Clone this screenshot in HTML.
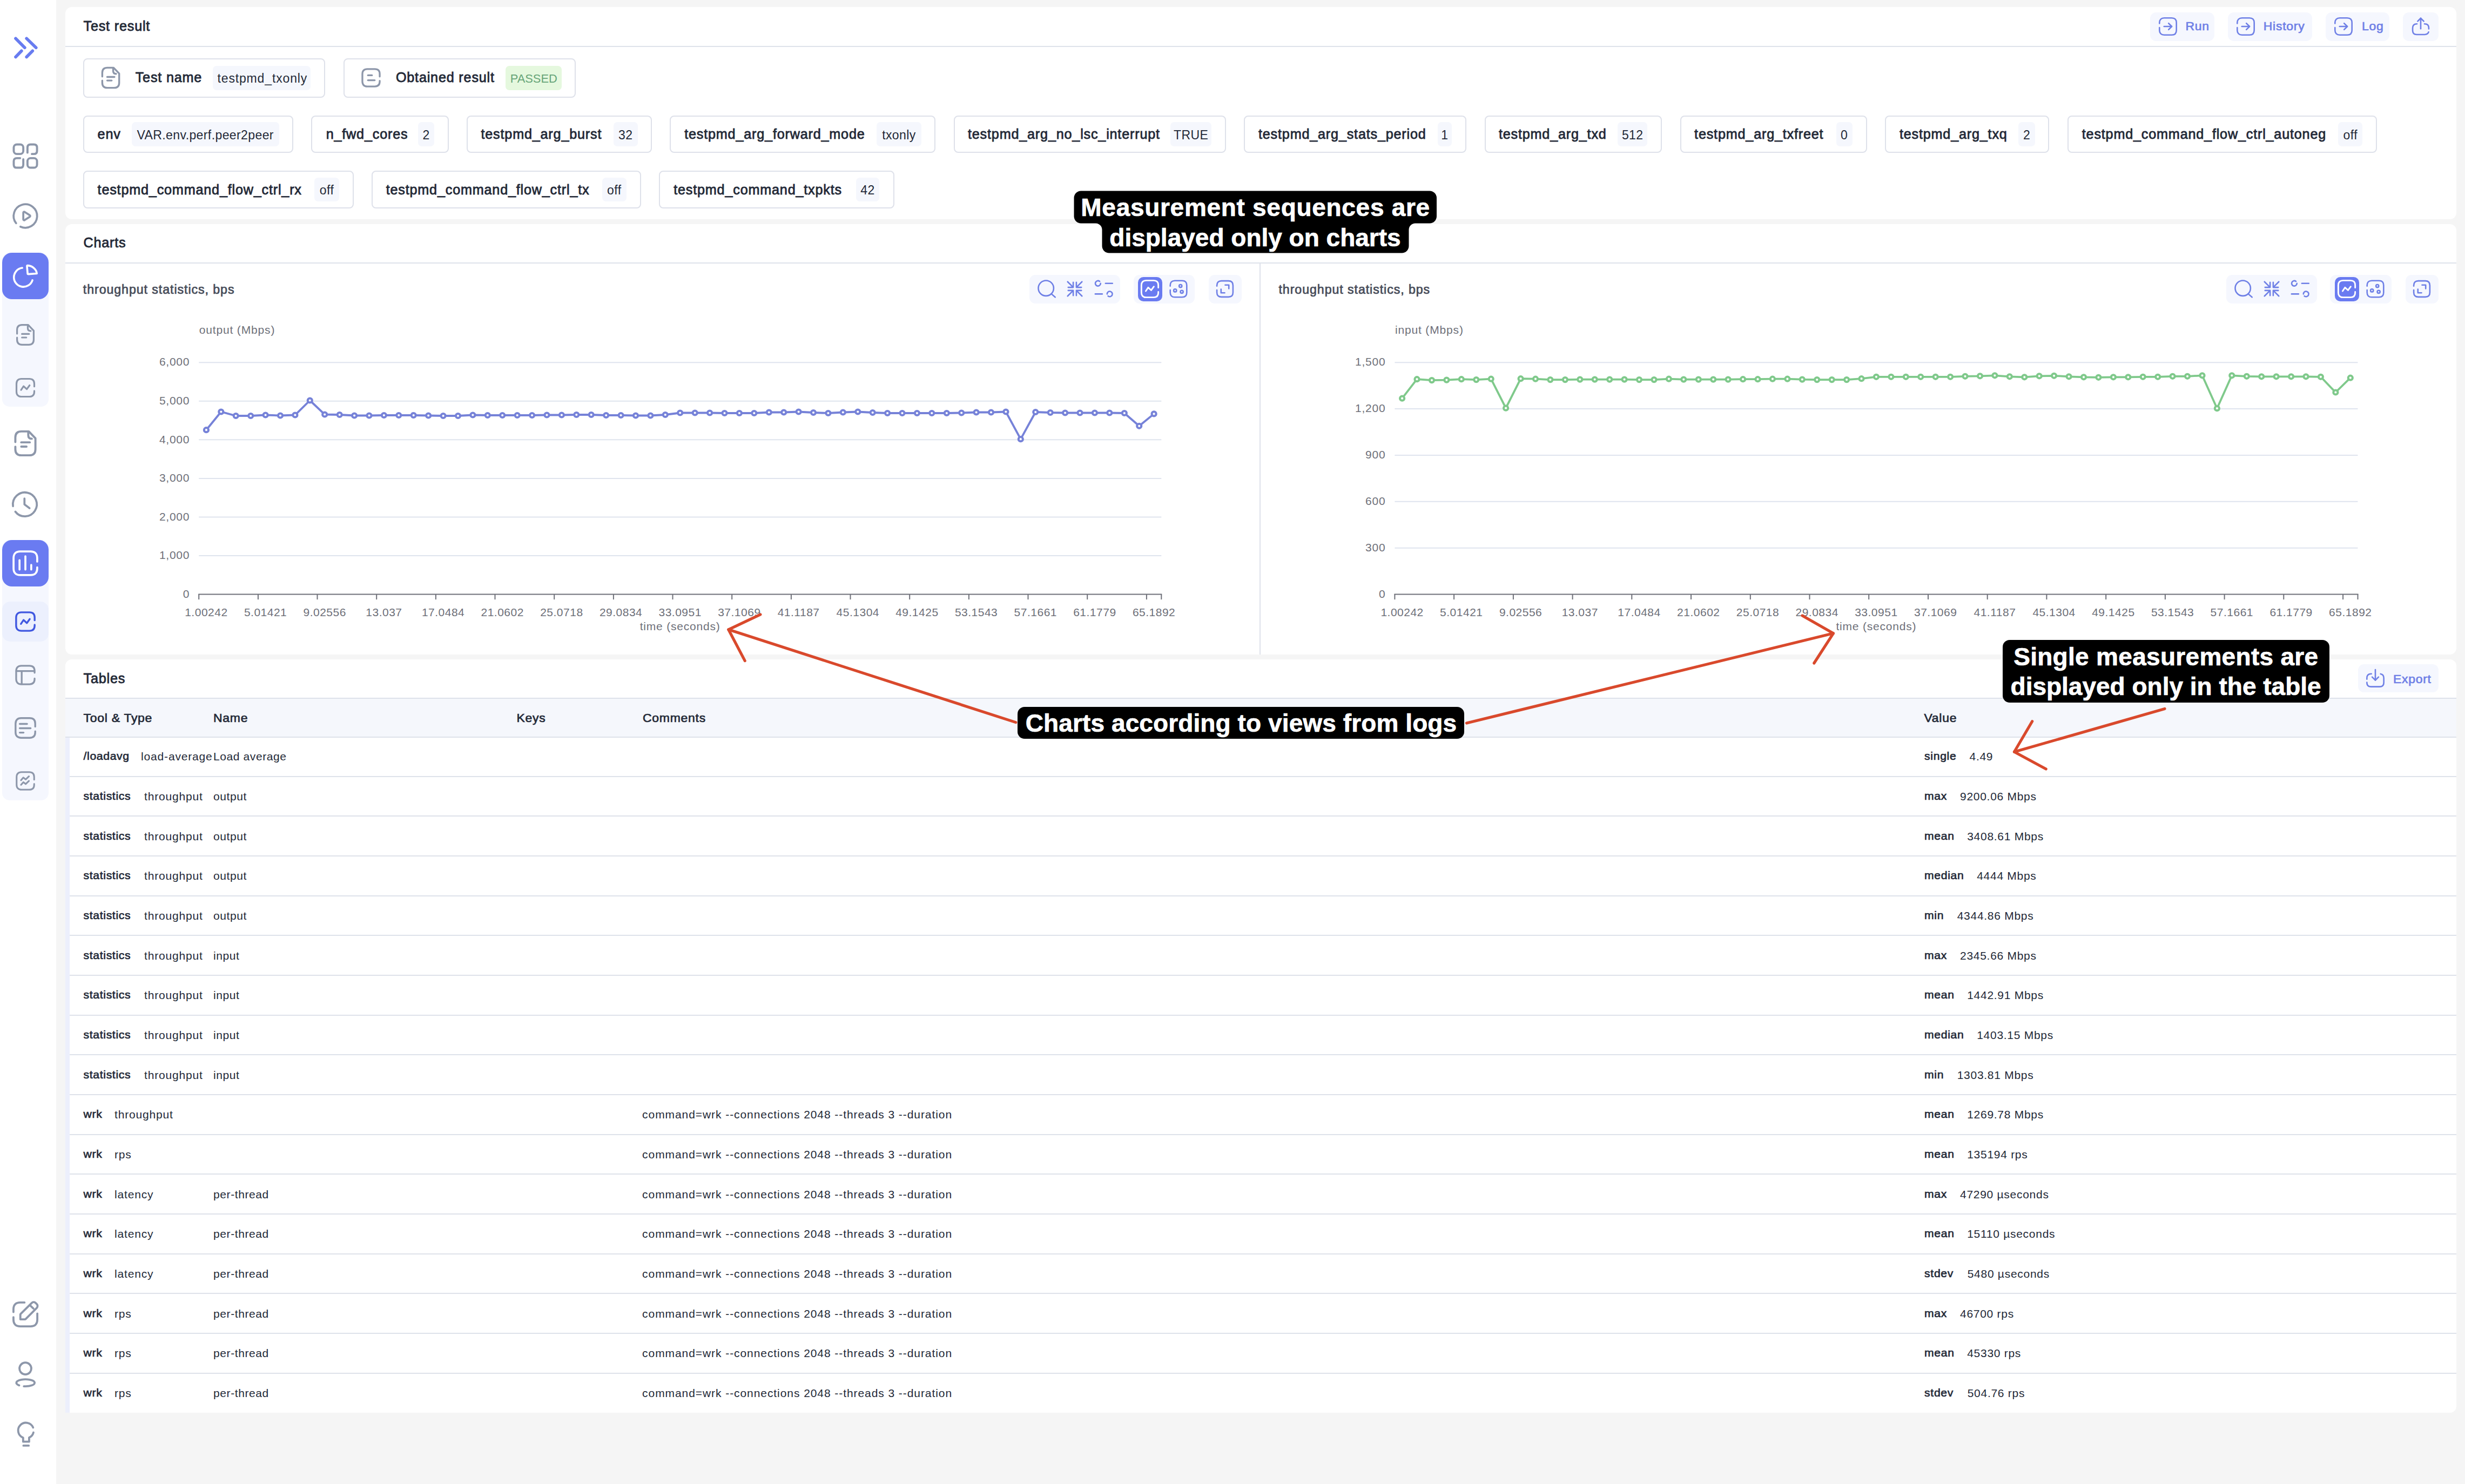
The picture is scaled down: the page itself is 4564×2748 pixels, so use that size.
<!DOCTYPE html>
<html><head><meta charset="utf-8"><title>Test result</title>
<style>
html,body{margin:0;padding:0}
body{width:4564px;height:2748px;background:#f5f5f5;position:relative;overflow:hidden;font-family:"Liberation Sans", sans-serif;}
.a{position:absolute;display:block}
.t{position:absolute;line-height:1;white-space:pre;font-family:"Liberation Sans", sans-serif;}
</style></head><body>
<div class="a" style="left:0.0px;top:0.0px;width:104.0px;height:2748.0px;background:#fff;"></div>
<svg class="a" style="left:0;top:40px" width="104" height="100" viewBox="0 40 104 100" fill="none" stroke="#687cf0" stroke-width="5.7" stroke-linecap="round"><path d="M29 71.3L45.8 88.2M29 105.4L39.8 94.3M49.2 71.3L66.7 88.2M49.2 105.4L60.3 94.3"/></svg>
<svg class="a" style="left:7.2px;top:249.4px" width="80" height="80" viewBox="-40 -40 80 80" fill="none" stroke="#8d97aa" stroke-width="1.719" stroke-linecap="round" stroke-linejoin="round"><g transform="scale(2.2684) translate(-12 -12)"><rect x="2.500" y="2.500" width="7.800" height="7.800" rx="2.500"/><path d="M13.700 9.200V5c0-1.700.8-2.500 2.500-2.500h2.800c1.700 0 2.500.8 2.500 2.500v2.800c0 1.700-.8 2.500-2.500 2.500h-1.700"/><path d="M7.700 13.700H5c-1.700 0-2.500.8-2.500 2.500V19c0 1.700.8 2.500 2.500 2.500h2.800c1.700 0 2.500-.8 2.500-2.500v-4.400"/><rect x="13.700" y="13.700" width="7.800" height="7.800" rx="2.500"/></g></svg>
<svg class="a" style="left:7.2px;top:360.3px" width="80" height="80" viewBox="-40 -40 80 80" fill="none" stroke="#8d97aa" stroke-width="1.616" stroke-linecap="round" stroke-linejoin="round"><g transform="scale(2.2895) translate(-12 -12)"><path d="M4.510 17.850A9.500 9.500 0 1 1 7.990 20.610"/><path d="M10.300 9.300v5.400c0 .6.600.900 1.100.6l4.200-2.700c.4-.3.400-.9 0-1.200l-4.200-2.700c-.5-.3-1.100 0-1.100.6z"/></g></svg>
<div class="a" style="left:4.0px;top:468.0px;width:86.0px;height:285.0px;background:#f5f7fe;border-radius:14px;"></div>
<div class="a" style="left:4.0px;top:468.0px;width:86.0px;height:85.5px;background:#6a7bf1;border-radius:18px;"></div>
<svg class="a" style="left:7.2px;top:470.5px" width="80" height="80" viewBox="-40 -40 80 80" fill="none" stroke="#fff" stroke-width="1.580" stroke-linecap="round" stroke-linejoin="round"><g transform="scale(2.2789) translate(-12 -12)"><path d="M9.440 5.440A7.720 7.720 0 1 0 17.720 15.490"/><path d="M13.300 4.100l.5 5.800c0 .4.200.6.600.6l6.900-.5C21 6.500 17.600 3.800 13.900 3.500c-.4 0-.6.200-.6.600z"/></g></svg>
<svg class="a" style="left:7.3px;top:579.5px" width="80" height="80" viewBox="-40 -40 80 80" fill="none" stroke="#8d97aa" stroke-width="1.662" stroke-linecap="round" stroke-linejoin="round"><g transform="scale(1.9250) translate(-12 -12)"><path d="M4 10.900V7.300C4 4.200 5.700 2.500 8.800 2.500h5.900L20 8v8.700c0 3.100-1.700 4.800-4.800 4.800H8.800C5.700 21.500 4 19.800 4 16.700v-2.000"/><path d="M14.300 2.800v2.700c0 1.800 1 2.800 2.800 2.800"/><path d="M8.700 11.200h6.800"/><path d="M8.700 14.600h4.200"/></g></svg>
<svg class="a" style="left:7.0px;top:677.8px" width="80" height="80" viewBox="-40 -40 80 80" fill="none" stroke="#8d97aa" stroke-width="1.842" stroke-linecap="round" stroke-linejoin="round"><g transform="scale(1.7368) translate(-12 -12)"><path d="M21.5 15.3v.9c0 3.4-1.900 5.300-5.300 5.300H7.800c-3.400 0-5.300-1.900-5.300-5.300V7.800c0-3.400 1.900-5.300 5.300-5.300h8.400c3.400 0 5.300 1.900 5.300 5.300v2.900"/><path d="M7.400 14.400l2.700-4.000 3.400 3.100 3.000-4.100"/></g></svg>
<svg class="a" style="left:6.9px;top:781.3px" width="80" height="80" viewBox="-40 -40 80 80" fill="none" stroke="#8d97aa" stroke-width="1.677" stroke-linecap="round" stroke-linejoin="round"><g transform="scale(2.3250) translate(-12 -12)"><path d="M4 10.900V7.300C4 4.200 5.700 2.500 8.800 2.500h5.900L20 8v8.700c0 3.100-1.700 4.800-4.800 4.800H8.800C5.700 21.500 4 19.800 4 16.700v-2.000"/><path d="M14.300 2.800v2.700c0 1.800 1 2.800 2.800 2.800"/><path d="M8.700 11.200h6.800"/><path d="M8.700 14.600h4.200"/></g></svg>
<svg class="a" style="left:6.3px;top:893.9px" width="80" height="80" viewBox="-40 -40 80 80" fill="none" stroke="#8d97aa" stroke-width="1.630" stroke-linecap="round" stroke-linejoin="round"><g transform="scale(2.3316) translate(-12 -12)"><path d="M2.600 13.400A9.500 9.500 0 1 1 4.460 17.780"/><path d="M11.700 7.400v4.600l4 3"/></g></svg>
<div class="a" style="left:4.0px;top:1000.0px;width:86.0px;height:482.0px;background:#f5f7fe;border-radius:14px;"></div>
<div class="a" style="left:4.0px;top:1000.0px;width:86.0px;height:85.5px;background:#6a7bf1;border-radius:18px;"></div>
<svg class="a" style="left:7.3px;top:1002.7px" width="80" height="80" viewBox="-40 -40 80 80" fill="none" stroke="#fff" stroke-width="1.605" stroke-linecap="round" stroke-linejoin="round"><g transform="scale(2.3053) translate(-12 -12)"><path d="M21.5 15.3v.9c0 3.4-1.900 5.300-5.300 5.300H7.800c-3.400 0-5.300-1.900-5.300-5.300V7.800c0-3.400 1.900-5.300 5.300-5.300h8.400c3.400 0 5.300 1.900 5.300 5.300v2.900"/><path d="M7.300 9.600v7.400"/><path d="M12 6.400v10.600"/><path d="M16.700 13.300v3.700"/></g></svg>
<div class="a" style="left:4.0px;top:1113.5px;width:86.0px;height:74.8px;background:#ecf0fd;border-radius:15px;"></div>
<svg class="a" style="left:7.2px;top:1111.2px" width="80" height="80" viewBox="-40 -40 80 80" fill="none" stroke="#4058e0" stroke-width="1.883" stroke-linecap="round" stroke-linejoin="round"><g transform="scale(1.8053) translate(-12 -12)"><path d="M21.5 15.3v.9c0 3.4-1.900 5.300-5.300 5.300H7.800c-3.400 0-5.300-1.900-5.300-5.300V7.800c0-3.400 1.900-5.300 5.300-5.300h8.400c3.400 0 5.300 1.900 5.300 5.300v2.900"/><path d="M7.400 14.400l2.700-4.000 3.400 3.100 3.000-4.100"/></g></svg>
<svg class="a" style="left:7.3px;top:1209.5px" width="80" height="80" viewBox="-40 -40 80 80" fill="none" stroke="#8d97aa" stroke-width="1.839" stroke-linecap="round" stroke-linejoin="round"><g transform="scale(1.7947) translate(-12 -12)"><path d="M21.5 15.6v.6c0 3.400-1.900 5.300-5.300 5.300H7.800c-3.400 0-5.300-1.900-5.300-5.300V7.800c0-3.400 1.900-5.300 5.300-5.300h8.400c3.400 0 5.300 1.900 5.300 5.300v1.900"/><path d="M2.700 7.900h18.600"/><path d="M8.200 8.100v13.200"/></g></svg>
<svg class="a" style="left:7.0px;top:1307.5px" width="80" height="80" viewBox="-40 -40 80 80" fill="none" stroke="#8d97aa" stroke-width="1.775" stroke-linecap="round" stroke-linejoin="round"><g transform="scale(1.9158) translate(-12 -12)"><path d="M21.5 15.3v.9c0 3.4-1.900 5.300-5.300 5.300H7.800c-3.400 0-5.300-1.900-5.300-5.300V7.800c0-3.400 1.900-5.300 5.300-5.300h8.400c3.400 0 5.300 1.900 5.300 5.300v2.900"/><path d="M6.600 8.100h7"/><path d="M6.600 12.300h10.400"/><path d="M6.600 16.500h3.600"/></g></svg>
<svg class="a" style="left:7.1px;top:1406.3px" width="80" height="80" viewBox="-40 -40 80 80" fill="none" stroke="#8d97aa" stroke-width="1.812" stroke-linecap="round" stroke-linejoin="round"><g transform="scale(1.7105) translate(-12 -12)"><path d="M21.5 15.3v.9c0 3.4-1.900 5.300-5.300 5.300H7.800c-3.400 0-5.300-1.900-5.300-5.300V7.800c0-3.400 1.900-5.300 5.300-5.300h8.400c3.400 0 5.300 1.900 5.300 5.300v2.900"/><path d="M7.300 11.300l2.500-2.900 2.500 2 3.500-3.300"/><path d="M7.300 16.300l2.500-2.900 2.500 2 3.500-3.300"/></g></svg>
<svg class="a" style="left:7.2px;top:2394.2px" width="80" height="80" viewBox="-40 -40 80 80" fill="none" stroke="#8d97aa" stroke-width="1.633" stroke-linecap="round" stroke-linejoin="round"><g transform="scale(2.3263) translate(-12 -12)"><path d="M11.300 2.500H7.800c-3.400 0-5.300 1.900-5.300 5.300v2.300"/><path d="M2.500 14.200v2c0 3.400 1.900 5.300 5.300 5.300h8.400c3.400 0 5.300-1.900 5.300-5.300v-4.900"/><path d="M8 15.900v-3.700c0-.3.100-.5.300-.7l8.700-8.600c.9-.9 2.300-.9 3.200 0l.8.800c.9.900.9 2.300 0 3.200l-8.700 8.700c-.2.200-.4.300-.7.300H8z"/><path d="M15.700 4.700l2.700 2.600"/></g></svg>
<svg class="a" style="left:7.0px;top:2505.5px" width="80" height="80" viewBox="-40 -40 80 80" fill="none" stroke="#8d97aa" stroke-width="1.633" stroke-linecap="round" stroke-linejoin="round"><g transform="scale(2.3263) translate(-12 -12)"><circle cx="12" cy="6.9" r="4.7"/><path d="M10.8 21.06A7.3 2.8 0 1 0 7.06 20.33"/></g></svg>
<svg class="a" style="left:8.0px;top:2614.0px" width="80" height="80" viewBox="-40 -40 80 80" fill="none" stroke="#8d97aa" stroke-width="1.796" stroke-linecap="round" stroke-linejoin="round"><g transform="scale(2.1158) translate(-12 -12)"><path d="M18.57 11.36A6.8 6.8 0 0 1 14.8 15.8V19.4H9.55V15.94A6.8 6.8 0 1 1 18.3 7.05"/><path d="M9.8 22.85h4.65"/></g></svg>
<div class="a" style="left:121.0px;top:13.0px;width:4427.0px;height:392.5px;background:#fff;border-radius:12px;"></div>
<div class="t" style="left:154.5px;top:36.0px;font-size:25.2px;font-weight:400;color:#232937;letter-spacing:0.8064px;-webkit-text-stroke:0.81px #232937;">Test result</div>
<div class="a" style="left:121.0px;top:85.2px;width:4427.0px;height:2.0px;background:#dee2ea;"></div>
<div class="a" style="left:3981.4px;top:22.7px;width:118.3px;height:53.0px;background:#f5f7fe;border-radius:11px;"></div>
<svg class="a" style="left:3973.5px;top:9.2px" width="80" height="80" viewBox="-40 -40 80 80" fill="none" stroke="#6f80e6" stroke-width="1.573" stroke-linecap="round" stroke-linejoin="round"><g transform="scale(1.6526) translate(-12 -12)"><path d="M2.500 8.700V7.800c0-3.400 1.900-5.300 5.300-5.300h8.400c3.400 0 5.300 1.900 5.300 5.300v8.400c0 3.400-1.900 5.300-5.300 5.300H7.800c-3.400 0-5.300-1.900-5.300-5.300v-2.900"/><path d="M7.600 12h8.600"/><path d="M12.700 8.400l3.600 3.600-3.600 3.600"/></g></svg>
<div class="t" style="left:4046.4px;top:37.4px;font-size:22.96px;font-weight:400;color:#6f80e6;letter-spacing:0.73472px;-webkit-text-stroke:0.73px #6f80e6;">Run</div>
<div class="a" style="left:4125.0px;top:22.7px;width:156.3px;height:53.0px;background:#f5f7fe;border-radius:11px;"></div>
<svg class="a" style="left:4117.5px;top:9.2px" width="80" height="80" viewBox="-40 -40 80 80" fill="none" stroke="#6f80e6" stroke-width="1.573" stroke-linecap="round" stroke-linejoin="round"><g transform="scale(1.6526) translate(-12 -12)"><path d="M2.500 8.700V7.800c0-3.400 1.900-5.300 5.300-5.300h8.400c3.400 0 5.300 1.900 5.300 5.300v8.400c0 3.400-1.900 5.300-5.300 5.300H7.800c-3.400 0-5.300-1.900-5.300-5.300v-2.900"/><path d="M7.600 12h8.600"/><path d="M12.700 8.400l3.600 3.600-3.600 3.600"/></g></svg>
<div class="t" style="left:4190.8px;top:37.4px;font-size:22.96px;font-weight:400;color:#6f80e6;letter-spacing:0.73472px;-webkit-text-stroke:0.73px #6f80e6;">History</div>
<div class="a" style="left:4305.7px;top:22.7px;width:118.8px;height:53.0px;background:#f5f7fe;border-radius:11px;"></div>
<svg class="a" style="left:4298.5px;top:9.2px" width="80" height="80" viewBox="-40 -40 80 80" fill="none" stroke="#6f80e6" stroke-width="1.573" stroke-linecap="round" stroke-linejoin="round"><g transform="scale(1.6526) translate(-12 -12)"><path d="M2.500 8.700V7.800c0-3.400 1.900-5.300 5.300-5.300h8.400c3.400 0 5.300 1.900 5.300 5.300v8.400c0 3.400-1.900 5.300-5.300 5.300H7.800c-3.400 0-5.300-1.900-5.300-5.300v-2.900"/><path d="M7.600 12h8.600"/><path d="M12.700 8.400l3.600 3.600-3.600 3.600"/></g></svg>
<div class="t" style="left:4373.0px;top:37.4px;font-size:22.96px;font-weight:400;color:#6f80e6;letter-spacing:0.73472px;-webkit-text-stroke:0.73px #6f80e6;">Log</div>
<div class="a" style="left:4449.3px;top:22.7px;width:65.7px;height:53.0px;background:#f5f7fe;border-radius:11px;"></div>
<svg class="a" style="left:4442.0px;top:9.2px" width="80" height="80" viewBox="-40 -40 80 80" fill="none" stroke="#6f80e6" stroke-width="1.652" stroke-linecap="round" stroke-linejoin="round"><g transform="scale(1.5737) translate(-12 -12)"><path d="M12 2.300v12.400"/><path d="M8.400 5.900L12 2.300l3.600 3.600"/><path d="M7.600 9H7.300C4.200 9 2.500 10.700 2.500 13.800v2.900c0 3.100 1.700 4.800 4.800 4.800h9.400c2.400 0 4-1 4.600-3"/><path d="M16.400 9h.3c3.100 0 4.800 1.700 4.800 4.800v1.100"/></g></svg>
<div class="a" style="left:153.8px;top:107.8px;width:448.4px;height:72.8px;background:#fff;border-radius:8px;border:2px solid #dee1ea;box-sizing:border-box;"></div>
<svg class="a" style="left:164.5px;top:104.2px" width="80" height="80" viewBox="-40 -40 80 80" fill="none" stroke="#8d97aa" stroke-width="1.738" stroke-linecap="round" stroke-linejoin="round"><g transform="scale(1.9563) translate(-12 -12)"><path d="M4 10.900V7.300C4 4.200 5.700 2.500 8.800 2.500h5.900L20 8v8.700c0 3.100-1.700 4.800-4.800 4.800H8.800C5.700 21.500 4 19.800 4 16.700v-2.000"/><path d="M14.300 2.800v2.700c0 1.800 1 2.800 2.800 2.800"/><path d="M8.700 11.200h6.800"/><path d="M8.700 14.600h4.200"/></g></svg>
<div class="t" style="left:250.7px;top:131.0px;font-size:25.2px;font-weight:400;color:#232937;letter-spacing:0.8064px;-webkit-text-stroke:0.81px #232937;">Test name</div>
<div class="a" style="left:394.4px;top:122.2px;width:181.1px;height:44.4px;background:#f5f7fd;border-radius:7px;"></div>
<div class="t" style="left:402.5px;top:133.7px;font-size:23px;font-weight:400;color:#232937;letter-spacing:0.85px;">testpmd_txonly</div>
<div class="a" style="left:635.9px;top:107.8px;width:430.1px;height:72.8px;background:#fff;border-radius:8px;border:2px solid #dee1ea;box-sizing:border-box;"></div>
<svg class="a" style="left:646.6px;top:104.3px" width="80" height="80" viewBox="-40 -40 80 80" fill="none" stroke="#8d97aa" stroke-width="1.953" stroke-linecap="round" stroke-linejoin="round"><g transform="scale(1.6895) translate(-12 -12)"><path d="M21.5 15.3v.9c0 3.4-1.900 5.300-5.300 5.300H7.800c-3.400 0-5.300-1.900-5.300-5.300V7.800c0-3.400 1.900-5.300 5.300-5.300h8.400c3.400 0 5.300 1.900 5.300 5.300v2.900"/><path d="M8.600 9.300h4.400"/><path d="M8.600 14.700h7.400"/></g></svg>
<div class="t" style="left:732.9px;top:131.0px;font-size:25.2px;font-weight:400;color:#232937;letter-spacing:0.8064px;-webkit-text-stroke:0.81px #232937;">Obtained result</div>
<div class="a" style="left:935.9px;top:122.2px;width:104.0px;height:44.4px;background:#e5f8de;border-radius:7px;"></div>
<div class="t" style="left:944.7px;top:134.7px;font-size:21.9px;font-weight:400;color:#67a578;">PASSED</div>
<div class="a" style="left:153.8px;top:213.9px;width:389.4px;height:69.6px;background:#fff;border-radius:8px;border:2px solid #dee1ea;box-sizing:border-box;"></div>
<div class="t" style="left:180.6px;top:236.2px;font-size:25.2px;font-weight:400;color:#232937;letter-spacing:0.8064px;-webkit-text-stroke:0.81px #232937;">env</div>
<div class="a" style="left:243.9px;top:226.3px;width:272.7px;height:44.6px;background:#f5f7fd;border-radius:7px;"></div>
<div class="t" style="left:-619.8px;width:2000px;text-align:center;top:238.9px;font-size:23px;font-weight:400;color:#232937;letter-spacing:0.4px;">VAR.env.perf.peer2peer</div>
<div class="a" style="left:576.4px;top:213.9px;width:254.4px;height:69.6px;background:#fff;border-radius:8px;border:2px solid #dee1ea;box-sizing:border-box;"></div>
<div class="t" style="left:603.7px;top:236.2px;font-size:25.2px;font-weight:400;color:#232937;letter-spacing:0.8064px;-webkit-text-stroke:0.81px #232937;">n_fwd_cores</div>
<div class="a" style="left:774.0px;top:226.3px;width:30.3px;height:44.6px;background:#f5f7fd;border-radius:7px;"></div>
<div class="t" style="left:-210.9px;width:2000px;text-align:center;top:238.9px;font-size:23px;font-weight:400;color:#232937;letter-spacing:0.4px;">2</div>
<div class="a" style="left:864.2px;top:213.9px;width:342.4px;height:69.6px;background:#fff;border-radius:8px;border:2px solid #dee1ea;box-sizing:border-box;"></div>
<div class="t" style="left:890.5px;top:236.2px;font-size:25.2px;font-weight:400;color:#232937;letter-spacing:0.8064px;-webkit-text-stroke:0.81px #232937;">testpmd_arg_burst</div>
<div class="a" style="left:1135.8px;top:226.3px;width:44.8px;height:44.6px;background:#f5f7fd;border-radius:7px;"></div>
<div class="t" style="left:158.2px;width:2000px;text-align:center;top:238.9px;font-size:23px;font-weight:400;color:#232937;letter-spacing:0.4px;">32</div>
<div class="a" style="left:1240.4px;top:213.9px;width:492.0px;height:69.6px;background:#fff;border-radius:8px;border:2px solid #dee1ea;box-sizing:border-box;"></div>
<div class="t" style="left:1267.2px;top:236.2px;font-size:25.2px;font-weight:400;color:#232937;letter-spacing:0.8064px;-webkit-text-stroke:0.81px #232937;">testpmd_arg_forward_mode</div>
<div class="a" style="left:1623.0px;top:226.3px;width:82.8px;height:44.6px;background:#f5f7fd;border-radius:7px;"></div>
<div class="t" style="left:664.4px;width:2000px;text-align:center;top:238.9px;font-size:23px;font-weight:400;color:#232937;letter-spacing:0.4px;">txonly</div>
<div class="a" style="left:1765.7px;top:213.9px;width:504.2px;height:69.6px;background:#fff;border-radius:8px;border:2px solid #dee1ea;box-sizing:border-box;"></div>
<div class="t" style="left:1792.0px;top:236.2px;font-size:25.2px;font-weight:400;color:#232937;letter-spacing:0.8064px;-webkit-text-stroke:0.81px #232937;">testpmd_arg_no_lsc_interrupt</div>
<div class="a" style="left:2167.4px;top:226.3px;width:75.4px;height:44.6px;background:#f5f7fd;border-radius:7px;"></div>
<div class="t" style="left:1205.1px;width:2000px;text-align:center;top:238.9px;font-size:23px;font-weight:400;color:#232937;letter-spacing:0.4px;">TRUE</div>
<div class="a" style="left:2303.2px;top:213.9px;width:411.6px;height:69.6px;background:#fff;border-radius:8px;border:2px solid #dee1ea;box-sizing:border-box;"></div>
<div class="t" style="left:2330.0px;top:236.2px;font-size:25.2px;font-weight:400;color:#232937;letter-spacing:0.8064px;-webkit-text-stroke:0.81px #232937;">testpmd_arg_stats_period</div>
<div class="a" style="left:2661.9px;top:226.3px;width:25.8px;height:44.6px;background:#f5f7fd;border-radius:7px;"></div>
<div class="t" style="left:1674.8px;width:2000px;text-align:center;top:238.9px;font-size:23px;font-weight:400;color:#232937;letter-spacing:0.4px;">1</div>
<div class="a" style="left:2748.6px;top:213.9px;width:328.4px;height:69.6px;background:#fff;border-radius:8px;border:2px solid #dee1ea;box-sizing:border-box;"></div>
<div class="t" style="left:2774.9px;top:236.2px;font-size:25.2px;font-weight:400;color:#232937;letter-spacing:0.8064px;-webkit-text-stroke:0.81px #232937;">testpmd_arg_txd</div>
<div class="a" style="left:2994.9px;top:226.3px;width:55.5px;height:44.6px;background:#f5f7fd;border-radius:7px;"></div>
<div class="t" style="left:2022.7px;width:2000px;text-align:center;top:238.9px;font-size:23px;font-weight:400;color:#232937;letter-spacing:0.4px;">512</div>
<div class="a" style="left:3110.8px;top:213.9px;width:346.0px;height:69.6px;background:#fff;border-radius:8px;border:2px solid #dee1ea;box-sizing:border-box;"></div>
<div class="t" style="left:3137.1px;top:236.2px;font-size:25.2px;font-weight:400;color:#232937;letter-spacing:0.8064px;-webkit-text-stroke:0.81px #232937;">testpmd_arg_txfreet</div>
<div class="a" style="left:3399.5px;top:226.3px;width:30.2px;height:44.6px;background:#f5f7fd;border-radius:7px;"></div>
<div class="t" style="left:2414.6px;width:2000px;text-align:center;top:238.9px;font-size:23px;font-weight:400;color:#232937;letter-spacing:0.4px;">0</div>
<div class="a" style="left:3490.1px;top:213.9px;width:304.1px;height:69.6px;background:#fff;border-radius:8px;border:2px solid #dee1ea;box-sizing:border-box;"></div>
<div class="t" style="left:3516.9px;top:236.2px;font-size:25.2px;font-weight:400;color:#232937;letter-spacing:0.8064px;-webkit-text-stroke:0.81px #232937;">testpmd_arg_txq</div>
<div class="a" style="left:3737.4px;top:226.3px;width:30.2px;height:44.6px;background:#f5f7fd;border-radius:7px;"></div>
<div class="t" style="left:2752.5px;width:2000px;text-align:center;top:238.9px;font-size:23px;font-weight:400;color:#232937;letter-spacing:0.4px;">2</div>
<div class="a" style="left:3827.5px;top:213.9px;width:573.8px;height:69.6px;background:#fff;border-radius:8px;border:2px solid #dee1ea;box-sizing:border-box;"></div>
<div class="t" style="left:3854.8px;top:236.2px;font-size:25.2px;font-weight:400;color:#232937;letter-spacing:0.8064px;-webkit-text-stroke:0.81px #232937;">testpmd_command_flow_ctrl_autoneg</div>
<div class="a" style="left:4329.4px;top:226.3px;width:44.8px;height:44.6px;background:#f5f7fd;border-radius:7px;"></div>
<div class="t" style="left:3351.8px;width:2000px;text-align:center;top:238.9px;font-size:23px;font-weight:400;color:#232937;letter-spacing:0.4px;">off</div>
<div class="a" style="left:153.8px;top:316.3px;width:501.3px;height:69.6px;background:#fff;border-radius:8px;border:2px solid #dee1ea;box-sizing:border-box;"></div>
<div class="t" style="left:180.6px;top:338.6px;font-size:25.2px;font-weight:400;color:#232937;letter-spacing:0.8064px;-webkit-text-stroke:0.81px #232937;">testpmd_command_flow_ctrl_rx</div>
<div class="a" style="left:582.3px;top:328.7px;width:45.3px;height:44.6px;background:#f5f7fd;border-radius:7px;"></div>
<div class="t" style="left:-395.0px;width:2000px;text-align:center;top:341.3px;font-size:23px;font-weight:400;color:#232937;letter-spacing:0.4px;">off</div>
<div class="a" style="left:688.4px;top:316.3px;width:498.9px;height:69.6px;background:#fff;border-radius:8px;border:2px solid #dee1ea;box-sizing:border-box;"></div>
<div class="t" style="left:714.7px;top:338.6px;font-size:25.2px;font-weight:400;color:#232937;letter-spacing:0.8064px;-webkit-text-stroke:0.81px #232937;">testpmd_command_flow_ctrl_tx</div>
<div class="a" style="left:1114.9px;top:328.7px;width:44.8px;height:44.6px;background:#f5f7fd;border-radius:7px;"></div>
<div class="t" style="left:137.3px;width:2000px;text-align:center;top:341.3px;font-size:23px;font-weight:400;color:#232937;letter-spacing:0.4px;">off</div>
<div class="a" style="left:1220.4px;top:316.3px;width:435.6px;height:69.6px;background:#fff;border-radius:8px;border:2px solid #dee1ea;box-sizing:border-box;"></div>
<div class="t" style="left:1247.2px;top:338.6px;font-size:25.2px;font-weight:400;color:#232937;letter-spacing:0.8064px;-webkit-text-stroke:0.81px #232937;">testpmd_command_txpkts</div>
<div class="a" style="left:1584.6px;top:328.7px;width:43.8px;height:44.6px;background:#f5f7fd;border-radius:7px;"></div>
<div class="t" style="left:606.5px;width:2000px;text-align:center;top:341.3px;font-size:23px;font-weight:400;color:#232937;letter-spacing:0.4px;">42</div>
<div class="a" style="left:121.0px;top:414.8px;width:4427.0px;height:797.6px;background:#fff;border-radius:12px;"></div>
<div class="t" style="left:154.5px;top:437.2px;font-size:25.2px;font-weight:400;color:#232937;letter-spacing:0.8064px;-webkit-text-stroke:0.81px #232937;">Charts</div>
<div class="a" style="left:121.0px;top:486.0px;width:4427.0px;height:2.0px;background:#dee2ea;"></div>
<div class="a" style="left:2332.0px;top:488.0px;width:2.0px;height:724.4px;background:#dee2ea;"></div>
<div class="a" style="left:1906.4px;top:508.8px;width:167.6px;height:52.8px;background:#f5f7fe;border-radius:11px;"></div>
<svg class="a" style="left:1897.8px;top:495.1px" width="80" height="80" viewBox="-40 -40 80 80" fill="none" stroke="#6f80e6" stroke-width="1.594" stroke-linecap="round" stroke-linejoin="round"><g transform="scale(1.6316) translate(-12 -12)"><circle cx="11.200" cy="11.200" r="8.700"/><path d="M17.600 17.900l4 3.500"/></g></svg>
<svg class="a" style="left:1950.4px;top:495.1px" width="80" height="80" viewBox="-40 -40 80 80" fill="none" stroke="#6f80e6" stroke-width="1.703" stroke-linecap="round" stroke-linejoin="round"><g transform="scale(1.5263) translate(-12 -12)"><path d="M3.300 3.300l6.500 6.500"/><path d="M4 10.100h6.100V4"/><path d="M20.700 3.300l-6.500 6.500"/><path d="M20 10.100h-6.100V4"/><path d="M3.300 20.700l6.500-6.500"/><path d="M4 13.900h6.100V20"/><path d="M20.700 20.700l-6.500-6.500"/><path d="M20 13.900h-6.100V20"/></g></svg>
<svg class="a" style="left:2003.6px;top:495.1px" width="80" height="80" viewBox="-40 -40 80 80" fill="none" stroke="#6f80e6" stroke-width="1.549" stroke-linecap="round" stroke-linejoin="round"><g transform="scale(1.6789) translate(-12 -12)"><path d="M7.26 3.68A2.900 2.900 0 1 0 8.300 5.900"/><path d="M13.700 5.900h7.700"/><path d="M16.540 19.820A2.900 2.900 0 1 0 15.500 17.600"/><path d="M10.100 17.600H2.400"/></g></svg>
<div class="a" style="left:2098.7px;top:508.8px;width:113.7px;height:52.8px;background:#f5f7fe;border-radius:11px;"></div>
<div class="a" style="left:2106.9px;top:512.8px;width:45.0px;height:45.0px;background:#6a7bf1;border-radius:10px;"></div>
<svg class="a" style="left:2089.4px;top:495.3px" width="80" height="80" viewBox="-40 -40 80 80" fill="none" stroke="#fff" stroke-width="1.760" stroke-linecap="round" stroke-linejoin="round"><g transform="scale(1.6474) translate(-12 -12)"><path d="M21.5 15.3v.9c0 3.4-1.900 5.300-5.300 5.300H7.800c-3.400 0-5.300-1.900-5.300-5.300V7.800c0-3.400 1.900-5.300 5.300-5.300h8.400c3.400 0 5.300 1.900 5.300 5.300v2.900"/><path d="M7.400 14.400l2.700-4.000 3.400 3.100 3.000-4.100"/></g></svg>
<svg class="a" style="left:2142.2px;top:495.1px" width="80" height="80" viewBox="-40 -40 80 80" fill="none" stroke="#6f80e6" stroke-width="1.614" stroke-linecap="round" stroke-linejoin="round"><g transform="scale(1.6105) translate(-12 -12)"><path d="M2.500 8.700V7.800c0-3.400 1.900-5.300 5.300-5.300h8.400c3.400 0 5.300 1.900 5.300 5.300v8.400c0 3.400-1.900 5.300-5.300 5.300H7.800c-3.400 0-5.300-1.900-5.300-5.300v-2.900"/><circle cx="14.300" cy="8.600" r="1.600"/><circle cx="8.100" cy="13.800" r="1.600"/><circle cx="15.800" cy="15.300" r="1.600"/></g></svg>
<div class="a" style="left:2237.8px;top:508.8px;width:61.5px;height:52.8px;background:#f5f7fe;border-radius:11px;"></div>
<svg class="a" style="left:2228.3px;top:495.1px" width="80" height="80" viewBox="-40 -40 80 80" fill="none" stroke="#6f80e6" stroke-width="1.658" stroke-linecap="round" stroke-linejoin="round"><g transform="scale(1.5684) translate(-12 -12)"><path d="M2.500 8.700V7.800c0-3.400 1.900-5.300 5.300-5.300h8.400c3.400 0 5.300 1.900 5.300 5.300v8.400c0 3.400-1.900 5.300-5.300 5.300H7.800c-3.400 0-5.300-1.900-5.300-5.300v-2.900"/><path d="M12.300 7.400h4.300v4.300"/><path d="M11.700 16.600H7.400v-4.300"/></g></svg>
<div class="a" style="left:4122.1px;top:508.8px;width:167.6px;height:52.8px;background:#f5f7fe;border-radius:11px;"></div>
<svg class="a" style="left:4113.5px;top:495.1px" width="80" height="80" viewBox="-40 -40 80 80" fill="none" stroke="#6f80e6" stroke-width="1.594" stroke-linecap="round" stroke-linejoin="round"><g transform="scale(1.6316) translate(-12 -12)"><circle cx="11.200" cy="11.200" r="8.700"/><path d="M17.600 17.900l4 3.500"/></g></svg>
<svg class="a" style="left:4166.1px;top:495.1px" width="80" height="80" viewBox="-40 -40 80 80" fill="none" stroke="#6f80e6" stroke-width="1.703" stroke-linecap="round" stroke-linejoin="round"><g transform="scale(1.5263) translate(-12 -12)"><path d="M3.300 3.300l6.500 6.500"/><path d="M4 10.100h6.100V4"/><path d="M20.700 3.300l-6.500 6.500"/><path d="M20 10.100h-6.100V4"/><path d="M3.300 20.700l6.500-6.500"/><path d="M4 13.900h6.100V20"/><path d="M20.700 20.700l-6.500-6.500"/><path d="M20 13.900h-6.100V20"/></g></svg>
<svg class="a" style="left:4219.3px;top:495.1px" width="80" height="80" viewBox="-40 -40 80 80" fill="none" stroke="#6f80e6" stroke-width="1.549" stroke-linecap="round" stroke-linejoin="round"><g transform="scale(1.6789) translate(-12 -12)"><path d="M7.26 3.68A2.900 2.900 0 1 0 8.300 5.900"/><path d="M13.700 5.900h7.700"/><path d="M16.540 19.820A2.900 2.900 0 1 0 15.500 17.600"/><path d="M10.100 17.600H2.400"/></g></svg>
<div class="a" style="left:4314.4px;top:508.8px;width:113.7px;height:52.8px;background:#f5f7fe;border-radius:11px;"></div>
<div class="a" style="left:4322.6px;top:512.8px;width:45.0px;height:45.0px;background:#6a7bf1;border-radius:10px;"></div>
<svg class="a" style="left:4305.1px;top:495.3px" width="80" height="80" viewBox="-40 -40 80 80" fill="none" stroke="#fff" stroke-width="1.760" stroke-linecap="round" stroke-linejoin="round"><g transform="scale(1.6474) translate(-12 -12)"><path d="M21.5 15.3v.9c0 3.4-1.900 5.300-5.300 5.300H7.800c-3.400 0-5.300-1.900-5.300-5.300V7.800c0-3.400 1.900-5.300 5.300-5.300h8.400c3.400 0 5.300 1.900 5.300 5.300v2.900"/><path d="M7.400 14.400l2.700-4.000 3.400 3.100 3.000-4.100"/></g></svg>
<svg class="a" style="left:4357.9px;top:495.1px" width="80" height="80" viewBox="-40 -40 80 80" fill="none" stroke="#6f80e6" stroke-width="1.614" stroke-linecap="round" stroke-linejoin="round"><g transform="scale(1.6105) translate(-12 -12)"><path d="M2.500 8.700V7.800c0-3.400 1.900-5.300 5.300-5.300h8.400c3.400 0 5.300 1.900 5.300 5.300v8.400c0 3.400-1.900 5.300-5.300 5.300H7.800c-3.400 0-5.300-1.900-5.300-5.300v-2.900"/><circle cx="14.300" cy="8.600" r="1.600"/><circle cx="8.100" cy="13.800" r="1.600"/><circle cx="15.800" cy="15.300" r="1.600"/></g></svg>
<div class="a" style="left:4453.5px;top:508.8px;width:61.5px;height:52.8px;background:#f5f7fe;border-radius:11px;"></div>
<svg class="a" style="left:4444.0px;top:495.1px" width="80" height="80" viewBox="-40 -40 80 80" fill="none" stroke="#6f80e6" stroke-width="1.658" stroke-linecap="round" stroke-linejoin="round"><g transform="scale(1.5684) translate(-12 -12)"><path d="M2.500 8.700V7.800c0-3.400 1.900-5.300 5.300-5.300h8.400c3.400 0 5.300 1.900 5.300 5.300v8.400c0 3.400-1.900 5.300-5.300 5.300H7.800c-3.400 0-5.300-1.900-5.300-5.300v-2.900"/><path d="M12.300 7.400h4.300v4.300"/><path d="M11.700 16.600H7.400v-4.300"/></g></svg>
<div class="t" style="left:153.8px;top:524.5px;font-size:23.17px;font-weight:400;color:#474c59;letter-spacing:0.94144px;-webkit-text-stroke:0.74px #474c59;">throughput statistics, bps</div>
<div class="t" style="left:2367.5px;top:524.5px;font-size:23.17px;font-weight:400;color:#474c59;letter-spacing:0.94144px;-webkit-text-stroke:0.74px #474c59;">throughput statistics, bps</div>
<svg class="a" style="left:0;top:0" width="4564" height="1300" viewBox="0 0 4564 1300" fill="none" stroke-linecap="butt"><line x1="368.2" y1="671.2" x2="2150.3" y2="671.2" stroke="#dfe4ee" stroke-width="2"/><line x1="368.2" y1="742.8" x2="2150.3" y2="742.8" stroke="#dfe4ee" stroke-width="2"/><line x1="368.2" y1="814.3" x2="2150.3" y2="814.3" stroke="#dfe4ee" stroke-width="2"/><line x1="368.2" y1="885.9" x2="2150.3" y2="885.9" stroke="#dfe4ee" stroke-width="2"/><line x1="368.2" y1="957.5" x2="2150.3" y2="957.5" stroke="#dfe4ee" stroke-width="2"/><line x1="368.2" y1="1029.0" x2="2150.3" y2="1029.0" stroke="#dfe4ee" stroke-width="2"/><line x1="367.2" y1="1100.6" x2="2151.3" y2="1100.6" stroke="#6e7079" stroke-width="2"/><line x1="368.2" y1="1100.6" x2="368.2" y2="1110.1" stroke="#6e7079" stroke-width="2"/><line x1="477.9" y1="1100.6" x2="477.9" y2="1110.1" stroke="#6e7079" stroke-width="2"/><line x1="587.5" y1="1100.6" x2="587.5" y2="1110.1" stroke="#6e7079" stroke-width="2"/><line x1="697.2" y1="1100.6" x2="697.2" y2="1110.1" stroke="#6e7079" stroke-width="2"/><line x1="806.9" y1="1100.6" x2="806.9" y2="1110.1" stroke="#6e7079" stroke-width="2"/><line x1="916.5" y1="1100.6" x2="916.5" y2="1110.1" stroke="#6e7079" stroke-width="2"/><line x1="1026.2" y1="1100.6" x2="1026.2" y2="1110.1" stroke="#6e7079" stroke-width="2"/><line x1="1135.9" y1="1100.6" x2="1135.9" y2="1110.1" stroke="#6e7079" stroke-width="2"/><line x1="1245.5" y1="1100.6" x2="1245.5" y2="1110.1" stroke="#6e7079" stroke-width="2"/><line x1="1355.2" y1="1100.6" x2="1355.2" y2="1110.1" stroke="#6e7079" stroke-width="2"/><line x1="1464.9" y1="1100.6" x2="1464.9" y2="1110.1" stroke="#6e7079" stroke-width="2"/><line x1="1574.5" y1="1100.6" x2="1574.5" y2="1110.1" stroke="#6e7079" stroke-width="2"/><line x1="1684.2" y1="1100.6" x2="1684.2" y2="1110.1" stroke="#6e7079" stroke-width="2"/><line x1="1793.9" y1="1100.6" x2="1793.9" y2="1110.1" stroke="#6e7079" stroke-width="2"/><line x1="1903.5" y1="1100.6" x2="1903.5" y2="1110.1" stroke="#6e7079" stroke-width="2"/><line x1="2013.2" y1="1100.6" x2="2013.2" y2="1110.1" stroke="#6e7079" stroke-width="2"/><line x1="2122.9" y1="1100.6" x2="2122.9" y2="1110.1" stroke="#6e7079" stroke-width="2"/><line x1="2150.3" y1="1100.6" x2="2150.3" y2="1110.1" stroke="#6e7079" stroke-width="2"/><polyline fill="none" stroke="#7682d8" stroke-width="3.8" stroke-linejoin="bevel" points="381.9,796.2 409.3,762.5 436.7,770.0 464.2,770.0 491.6,768.5 519.0,769.5 546.4,768.5 573.8,741.5 601.2,767.5 628.7,768.0 656.1,769.5 683.5,769.5 710.9,769.0 738.3,769.0 765.7,769.0 793.2,769.5 820.6,770.0 848.0,770.0 875.4,768.5 902.8,769.0 930.2,769.0 957.7,769.0 985.1,769.0 1012.5,768.5 1039.9,768.5 1067.3,768.0 1094.7,768.0 1122.2,769.0 1149.6,769.0 1177.0,769.5 1204.4,769.5 1231.8,768.0 1259.2,764.5 1286.7,764.5 1314.1,764.5 1341.5,765.0 1368.9,765.0 1396.3,765.0 1423.8,763.5 1451.2,763.5 1478.6,762.5 1506.0,764.0 1533.4,765.0 1560.8,763.5 1588.3,762.5 1615.7,764.0 1643.1,765.0 1670.5,765.0 1697.9,765.0 1725.3,765.0 1752.8,765.0 1780.2,764.5 1807.6,763.5 1835.0,763.5 1862.4,762.5 1889.8,813.2 1917.3,763.0 1944.7,764.0 1972.1,764.5 1999.5,764.5 2026.9,764.5 2054.3,764.5 2081.8,765.0 2109.2,788.8 2136.6,766.4"/><circle cx="381.9" cy="796.2" r="4.1" fill="#fff" stroke="#7682d8" stroke-width="4"/><circle cx="409.3" cy="762.5" r="4.1" fill="#fff" stroke="#7682d8" stroke-width="4"/><circle cx="436.7" cy="770.0" r="4.1" fill="#fff" stroke="#7682d8" stroke-width="4"/><circle cx="464.2" cy="770.0" r="4.1" fill="#fff" stroke="#7682d8" stroke-width="4"/><circle cx="491.6" cy="768.5" r="4.1" fill="#fff" stroke="#7682d8" stroke-width="4"/><circle cx="519.0" cy="769.5" r="4.1" fill="#fff" stroke="#7682d8" stroke-width="4"/><circle cx="546.4" cy="768.5" r="4.1" fill="#fff" stroke="#7682d8" stroke-width="4"/><circle cx="573.8" cy="741.5" r="4.1" fill="#fff" stroke="#7682d8" stroke-width="4"/><circle cx="601.2" cy="767.5" r="4.1" fill="#fff" stroke="#7682d8" stroke-width="4"/><circle cx="628.7" cy="768.0" r="4.1" fill="#fff" stroke="#7682d8" stroke-width="4"/><circle cx="656.1" cy="769.5" r="4.1" fill="#fff" stroke="#7682d8" stroke-width="4"/><circle cx="683.5" cy="769.5" r="4.1" fill="#fff" stroke="#7682d8" stroke-width="4"/><circle cx="710.9" cy="769.0" r="4.1" fill="#fff" stroke="#7682d8" stroke-width="4"/><circle cx="738.3" cy="769.0" r="4.1" fill="#fff" stroke="#7682d8" stroke-width="4"/><circle cx="765.7" cy="769.0" r="4.1" fill="#fff" stroke="#7682d8" stroke-width="4"/><circle cx="793.2" cy="769.5" r="4.1" fill="#fff" stroke="#7682d8" stroke-width="4"/><circle cx="820.6" cy="770.0" r="4.1" fill="#fff" stroke="#7682d8" stroke-width="4"/><circle cx="848.0" cy="770.0" r="4.1" fill="#fff" stroke="#7682d8" stroke-width="4"/><circle cx="875.4" cy="768.5" r="4.1" fill="#fff" stroke="#7682d8" stroke-width="4"/><circle cx="902.8" cy="769.0" r="4.1" fill="#fff" stroke="#7682d8" stroke-width="4"/><circle cx="930.2" cy="769.0" r="4.1" fill="#fff" stroke="#7682d8" stroke-width="4"/><circle cx="957.7" cy="769.0" r="4.1" fill="#fff" stroke="#7682d8" stroke-width="4"/><circle cx="985.1" cy="769.0" r="4.1" fill="#fff" stroke="#7682d8" stroke-width="4"/><circle cx="1012.5" cy="768.5" r="4.1" fill="#fff" stroke="#7682d8" stroke-width="4"/><circle cx="1039.9" cy="768.5" r="4.1" fill="#fff" stroke="#7682d8" stroke-width="4"/><circle cx="1067.3" cy="768.0" r="4.1" fill="#fff" stroke="#7682d8" stroke-width="4"/><circle cx="1094.7" cy="768.0" r="4.1" fill="#fff" stroke="#7682d8" stroke-width="4"/><circle cx="1122.2" cy="769.0" r="4.1" fill="#fff" stroke="#7682d8" stroke-width="4"/><circle cx="1149.6" cy="769.0" r="4.1" fill="#fff" stroke="#7682d8" stroke-width="4"/><circle cx="1177.0" cy="769.5" r="4.1" fill="#fff" stroke="#7682d8" stroke-width="4"/><circle cx="1204.4" cy="769.5" r="4.1" fill="#fff" stroke="#7682d8" stroke-width="4"/><circle cx="1231.8" cy="768.0" r="4.1" fill="#fff" stroke="#7682d8" stroke-width="4"/><circle cx="1259.2" cy="764.5" r="4.1" fill="#fff" stroke="#7682d8" stroke-width="4"/><circle cx="1286.7" cy="764.5" r="4.1" fill="#fff" stroke="#7682d8" stroke-width="4"/><circle cx="1314.1" cy="764.5" r="4.1" fill="#fff" stroke="#7682d8" stroke-width="4"/><circle cx="1341.5" cy="765.0" r="4.1" fill="#fff" stroke="#7682d8" stroke-width="4"/><circle cx="1368.9" cy="765.0" r="4.1" fill="#fff" stroke="#7682d8" stroke-width="4"/><circle cx="1396.3" cy="765.0" r="4.1" fill="#fff" stroke="#7682d8" stroke-width="4"/><circle cx="1423.8" cy="763.5" r="4.1" fill="#fff" stroke="#7682d8" stroke-width="4"/><circle cx="1451.2" cy="763.5" r="4.1" fill="#fff" stroke="#7682d8" stroke-width="4"/><circle cx="1478.6" cy="762.5" r="4.1" fill="#fff" stroke="#7682d8" stroke-width="4"/><circle cx="1506.0" cy="764.0" r="4.1" fill="#fff" stroke="#7682d8" stroke-width="4"/><circle cx="1533.4" cy="765.0" r="4.1" fill="#fff" stroke="#7682d8" stroke-width="4"/><circle cx="1560.8" cy="763.5" r="4.1" fill="#fff" stroke="#7682d8" stroke-width="4"/><circle cx="1588.3" cy="762.5" r="4.1" fill="#fff" stroke="#7682d8" stroke-width="4"/><circle cx="1615.7" cy="764.0" r="4.1" fill="#fff" stroke="#7682d8" stroke-width="4"/><circle cx="1643.1" cy="765.0" r="4.1" fill="#fff" stroke="#7682d8" stroke-width="4"/><circle cx="1670.5" cy="765.0" r="4.1" fill="#fff" stroke="#7682d8" stroke-width="4"/><circle cx="1697.9" cy="765.0" r="4.1" fill="#fff" stroke="#7682d8" stroke-width="4"/><circle cx="1725.3" cy="765.0" r="4.1" fill="#fff" stroke="#7682d8" stroke-width="4"/><circle cx="1752.8" cy="765.0" r="4.1" fill="#fff" stroke="#7682d8" stroke-width="4"/><circle cx="1780.2" cy="764.5" r="4.1" fill="#fff" stroke="#7682d8" stroke-width="4"/><circle cx="1807.6" cy="763.5" r="4.1" fill="#fff" stroke="#7682d8" stroke-width="4"/><circle cx="1835.0" cy="763.5" r="4.1" fill="#fff" stroke="#7682d8" stroke-width="4"/><circle cx="1862.4" cy="762.5" r="4.1" fill="#fff" stroke="#7682d8" stroke-width="4"/><circle cx="1889.8" cy="813.2" r="4.1" fill="#fff" stroke="#7682d8" stroke-width="4"/><circle cx="1917.3" cy="763.0" r="4.1" fill="#fff" stroke="#7682d8" stroke-width="4"/><circle cx="1944.7" cy="764.0" r="4.1" fill="#fff" stroke="#7682d8" stroke-width="4"/><circle cx="1972.1" cy="764.5" r="4.1" fill="#fff" stroke="#7682d8" stroke-width="4"/><circle cx="1999.5" cy="764.5" r="4.1" fill="#fff" stroke="#7682d8" stroke-width="4"/><circle cx="2026.9" cy="764.5" r="4.1" fill="#fff" stroke="#7682d8" stroke-width="4"/><circle cx="2054.3" cy="764.5" r="4.1" fill="#fff" stroke="#7682d8" stroke-width="4"/><circle cx="2081.8" cy="765.0" r="4.1" fill="#fff" stroke="#7682d8" stroke-width="4"/><circle cx="2109.2" cy="788.8" r="4.1" fill="#fff" stroke="#7682d8" stroke-width="4"/><circle cx="2136.6" cy="766.4" r="4.1" fill="#fff" stroke="#7682d8" stroke-width="4"/></svg>
<div class="t" style="left:368.7px;top:600.0px;font-size:21px;font-weight:400;color:#6e7079;letter-spacing:0.85px;">output (Mbps)</div>
<div class="t" style="left:-1648.8px;width:2000px;text-align:right;top:659.4px;font-size:21px;font-weight:400;color:#6e7079;letter-spacing:0.75px;">6,000</div>
<div class="t" style="left:-1648.8px;width:2000px;text-align:right;top:731.0px;font-size:21px;font-weight:400;color:#6e7079;letter-spacing:0.75px;">5,000</div>
<div class="t" style="left:-1648.8px;width:2000px;text-align:right;top:802.6px;font-size:21px;font-weight:400;color:#6e7079;letter-spacing:0.75px;">4,000</div>
<div class="t" style="left:-1648.8px;width:2000px;text-align:right;top:874.1px;font-size:21px;font-weight:400;color:#6e7079;letter-spacing:0.75px;">3,000</div>
<div class="t" style="left:-1648.8px;width:2000px;text-align:right;top:945.7px;font-size:21px;font-weight:400;color:#6e7079;letter-spacing:0.75px;">2,000</div>
<div class="t" style="left:-1648.8px;width:2000px;text-align:right;top:1017.3px;font-size:21px;font-weight:400;color:#6e7079;letter-spacing:0.75px;">1,000</div>
<div class="t" style="left:-1648.8px;width:2000px;text-align:right;top:1088.8px;font-size:21px;font-weight:400;color:#6e7079;letter-spacing:0.75px;">0</div>
<div class="t" style="left:-618.1px;width:2000px;text-align:center;top:1123.4px;font-size:21px;font-weight:400;color:#6e7079;letter-spacing:0.5px;">1.00242</div>
<div class="t" style="left:-508.4px;width:2000px;text-align:center;top:1123.4px;font-size:21px;font-weight:400;color:#6e7079;letter-spacing:0.5px;">5.01421</div>
<div class="t" style="left:-398.8px;width:2000px;text-align:center;top:1123.4px;font-size:21px;font-weight:400;color:#6e7079;letter-spacing:0.5px;">9.02556</div>
<div class="t" style="left:-289.1px;width:2000px;text-align:center;top:1123.4px;font-size:21px;font-weight:400;color:#6e7079;letter-spacing:0.5px;">13.037</div>
<div class="t" style="left:-179.4px;width:2000px;text-align:center;top:1123.4px;font-size:21px;font-weight:400;color:#6e7079;letter-spacing:0.5px;">17.0484</div>
<div class="t" style="left:-69.8px;width:2000px;text-align:center;top:1123.4px;font-size:21px;font-weight:400;color:#6e7079;letter-spacing:0.5px;">21.0602</div>
<div class="t" style="left:39.9px;width:2000px;text-align:center;top:1123.4px;font-size:21px;font-weight:400;color:#6e7079;letter-spacing:0.5px;">25.0718</div>
<div class="t" style="left:149.6px;width:2000px;text-align:center;top:1123.4px;font-size:21px;font-weight:400;color:#6e7079;letter-spacing:0.5px;">29.0834</div>
<div class="t" style="left:259.2px;width:2000px;text-align:center;top:1123.4px;font-size:21px;font-weight:400;color:#6e7079;letter-spacing:0.5px;">33.0951</div>
<div class="t" style="left:368.9px;width:2000px;text-align:center;top:1123.4px;font-size:21px;font-weight:400;color:#6e7079;letter-spacing:0.5px;">37.1069</div>
<div class="t" style="left:478.6px;width:2000px;text-align:center;top:1123.4px;font-size:21px;font-weight:400;color:#6e7079;letter-spacing:0.5px;">41.1187</div>
<div class="t" style="left:588.3px;width:2000px;text-align:center;top:1123.4px;font-size:21px;font-weight:400;color:#6e7079;letter-spacing:0.5px;">45.1304</div>
<div class="t" style="left:697.9px;width:2000px;text-align:center;top:1123.4px;font-size:21px;font-weight:400;color:#6e7079;letter-spacing:0.5px;">49.1425</div>
<div class="t" style="left:807.6px;width:2000px;text-align:center;top:1123.4px;font-size:21px;font-weight:400;color:#6e7079;letter-spacing:0.5px;">53.1543</div>
<div class="t" style="left:917.3px;width:2000px;text-align:center;top:1123.4px;font-size:21px;font-weight:400;color:#6e7079;letter-spacing:0.5px;">57.1661</div>
<div class="t" style="left:1026.9px;width:2000px;text-align:center;top:1123.4px;font-size:21px;font-weight:400;color:#6e7079;letter-spacing:0.5px;">61.1779</div>
<div class="t" style="left:1136.6px;width:2000px;text-align:center;top:1123.4px;font-size:21px;font-weight:400;color:#6e7079;letter-spacing:0.5px;">65.1892</div>
<div class="t" style="left:259.2px;width:2000px;text-align:center;top:1148.9px;font-size:21px;font-weight:400;color:#6e7079;letter-spacing:0.8px;">time (seconds)</div>
<svg class="a" style="left:0;top:0" width="4564" height="1300" viewBox="0 0 4564 1300" fill="none" stroke-linecap="butt"><line x1="2582.4" y1="671.2" x2="4365.5" y2="671.2" stroke="#dfe4ee" stroke-width="2"/><line x1="2582.4" y1="757.1" x2="4365.5" y2="757.1" stroke="#dfe4ee" stroke-width="2"/><line x1="2582.4" y1="843.0" x2="4365.5" y2="843.0" stroke="#dfe4ee" stroke-width="2"/><line x1="2582.4" y1="928.8" x2="4365.5" y2="928.8" stroke="#dfe4ee" stroke-width="2"/><line x1="2582.4" y1="1014.7" x2="4365.5" y2="1014.7" stroke="#dfe4ee" stroke-width="2"/><line x1="2581.4" y1="1100.6" x2="4366.5" y2="1100.6" stroke="#6e7079" stroke-width="2"/><line x1="2582.4" y1="1100.6" x2="2582.4" y2="1110.1" stroke="#6e7079" stroke-width="2"/><line x1="2692.1" y1="1100.6" x2="2692.1" y2="1110.1" stroke="#6e7079" stroke-width="2"/><line x1="2801.9" y1="1100.6" x2="2801.9" y2="1110.1" stroke="#6e7079" stroke-width="2"/><line x1="2911.6" y1="1100.6" x2="2911.6" y2="1110.1" stroke="#6e7079" stroke-width="2"/><line x1="3021.3" y1="1100.6" x2="3021.3" y2="1110.1" stroke="#6e7079" stroke-width="2"/><line x1="3131.0" y1="1100.6" x2="3131.0" y2="1110.1" stroke="#6e7079" stroke-width="2"/><line x1="3240.8" y1="1100.6" x2="3240.8" y2="1110.1" stroke="#6e7079" stroke-width="2"/><line x1="3350.5" y1="1100.6" x2="3350.5" y2="1110.1" stroke="#6e7079" stroke-width="2"/><line x1="3460.2" y1="1100.6" x2="3460.2" y2="1110.1" stroke="#6e7079" stroke-width="2"/><line x1="3570.0" y1="1100.6" x2="3570.0" y2="1110.1" stroke="#6e7079" stroke-width="2"/><line x1="3679.7" y1="1100.6" x2="3679.7" y2="1110.1" stroke="#6e7079" stroke-width="2"/><line x1="3789.4" y1="1100.6" x2="3789.4" y2="1110.1" stroke="#6e7079" stroke-width="2"/><line x1="3899.2" y1="1100.6" x2="3899.2" y2="1110.1" stroke="#6e7079" stroke-width="2"/><line x1="4008.9" y1="1100.6" x2="4008.9" y2="1110.1" stroke="#6e7079" stroke-width="2"/><line x1="4118.6" y1="1100.6" x2="4118.6" y2="1110.1" stroke="#6e7079" stroke-width="2"/><line x1="4228.3" y1="1100.6" x2="4228.3" y2="1110.1" stroke="#6e7079" stroke-width="2"/><line x1="4338.1" y1="1100.6" x2="4338.1" y2="1110.1" stroke="#6e7079" stroke-width="2"/><line x1="4365.5" y1="1100.6" x2="4365.5" y2="1110.1" stroke="#6e7079" stroke-width="2"/><polyline fill="none" stroke="#7fc98b" stroke-width="3.8" stroke-linejoin="bevel" points="2596.1,737.7 2623.5,702.2 2651.0,704.1 2678.4,703.6 2705.8,702.2 2733.3,703.1 2760.7,701.7 2788.1,755.7 2815.6,701.2 2843.0,701.7 2870.4,703.1 2897.9,703.1 2925.3,702.6 2952.7,702.6 2980.2,702.6 3007.6,702.6 3035.0,703.1 3062.5,703.1 3089.9,701.7 3117.3,702.6 3144.8,702.6 3172.2,702.6 3199.6,702.6 3227.1,702.2 3254.5,702.2 3281.9,701.7 3309.4,701.7 3336.8,702.6 3364.2,703.1 3391.7,703.1 3419.1,703.1 3446.5,701.2 3473.9,697.8 3501.4,697.8 3528.8,697.8 3556.2,697.8 3583.7,697.8 3611.1,697.8 3638.5,696.8 3666.0,696.3 3693.4,695.3 3720.8,697.3 3748.3,698.3 3775.7,696.3 3803.1,695.8 3830.6,697.3 3858.0,698.3 3885.4,698.8 3912.9,698.3 3940.3,698.3 3967.7,697.8 3995.2,697.8 4022.6,696.8 4050.0,696.8 4077.5,695.3 4104.9,756.2 4132.3,695.3 4159.8,696.8 4187.2,697.3 4214.6,697.3 4242.1,697.3 4269.5,697.3 4296.9,697.8 4324.4,726.5 4351.8,699.7"/><circle cx="2596.1" cy="737.7" r="4.1" fill="#fff" stroke="#7fc98b" stroke-width="4"/><circle cx="2623.5" cy="702.2" r="4.1" fill="#fff" stroke="#7fc98b" stroke-width="4"/><circle cx="2651.0" cy="704.1" r="4.1" fill="#fff" stroke="#7fc98b" stroke-width="4"/><circle cx="2678.4" cy="703.6" r="4.1" fill="#fff" stroke="#7fc98b" stroke-width="4"/><circle cx="2705.8" cy="702.2" r="4.1" fill="#fff" stroke="#7fc98b" stroke-width="4"/><circle cx="2733.3" cy="703.1" r="4.1" fill="#fff" stroke="#7fc98b" stroke-width="4"/><circle cx="2760.7" cy="701.7" r="4.1" fill="#fff" stroke="#7fc98b" stroke-width="4"/><circle cx="2788.1" cy="755.7" r="4.1" fill="#fff" stroke="#7fc98b" stroke-width="4"/><circle cx="2815.6" cy="701.2" r="4.1" fill="#fff" stroke="#7fc98b" stroke-width="4"/><circle cx="2843.0" cy="701.7" r="4.1" fill="#fff" stroke="#7fc98b" stroke-width="4"/><circle cx="2870.4" cy="703.1" r="4.1" fill="#fff" stroke="#7fc98b" stroke-width="4"/><circle cx="2897.9" cy="703.1" r="4.1" fill="#fff" stroke="#7fc98b" stroke-width="4"/><circle cx="2925.3" cy="702.6" r="4.1" fill="#fff" stroke="#7fc98b" stroke-width="4"/><circle cx="2952.7" cy="702.6" r="4.1" fill="#fff" stroke="#7fc98b" stroke-width="4"/><circle cx="2980.2" cy="702.6" r="4.1" fill="#fff" stroke="#7fc98b" stroke-width="4"/><circle cx="3007.6" cy="702.6" r="4.1" fill="#fff" stroke="#7fc98b" stroke-width="4"/><circle cx="3035.0" cy="703.1" r="4.1" fill="#fff" stroke="#7fc98b" stroke-width="4"/><circle cx="3062.5" cy="703.1" r="4.1" fill="#fff" stroke="#7fc98b" stroke-width="4"/><circle cx="3089.9" cy="701.7" r="4.1" fill="#fff" stroke="#7fc98b" stroke-width="4"/><circle cx="3117.3" cy="702.6" r="4.1" fill="#fff" stroke="#7fc98b" stroke-width="4"/><circle cx="3144.8" cy="702.6" r="4.1" fill="#fff" stroke="#7fc98b" stroke-width="4"/><circle cx="3172.2" cy="702.6" r="4.1" fill="#fff" stroke="#7fc98b" stroke-width="4"/><circle cx="3199.6" cy="702.6" r="4.1" fill="#fff" stroke="#7fc98b" stroke-width="4"/><circle cx="3227.1" cy="702.2" r="4.1" fill="#fff" stroke="#7fc98b" stroke-width="4"/><circle cx="3254.5" cy="702.2" r="4.1" fill="#fff" stroke="#7fc98b" stroke-width="4"/><circle cx="3281.9" cy="701.7" r="4.1" fill="#fff" stroke="#7fc98b" stroke-width="4"/><circle cx="3309.4" cy="701.7" r="4.1" fill="#fff" stroke="#7fc98b" stroke-width="4"/><circle cx="3336.8" cy="702.6" r="4.1" fill="#fff" stroke="#7fc98b" stroke-width="4"/><circle cx="3364.2" cy="703.1" r="4.1" fill="#fff" stroke="#7fc98b" stroke-width="4"/><circle cx="3391.7" cy="703.1" r="4.1" fill="#fff" stroke="#7fc98b" stroke-width="4"/><circle cx="3419.1" cy="703.1" r="4.1" fill="#fff" stroke="#7fc98b" stroke-width="4"/><circle cx="3446.5" cy="701.2" r="4.1" fill="#fff" stroke="#7fc98b" stroke-width="4"/><circle cx="3473.9" cy="697.8" r="4.1" fill="#fff" stroke="#7fc98b" stroke-width="4"/><circle cx="3501.4" cy="697.8" r="4.1" fill="#fff" stroke="#7fc98b" stroke-width="4"/><circle cx="3528.8" cy="697.8" r="4.1" fill="#fff" stroke="#7fc98b" stroke-width="4"/><circle cx="3556.2" cy="697.8" r="4.1" fill="#fff" stroke="#7fc98b" stroke-width="4"/><circle cx="3583.7" cy="697.8" r="4.1" fill="#fff" stroke="#7fc98b" stroke-width="4"/><circle cx="3611.1" cy="697.8" r="4.1" fill="#fff" stroke="#7fc98b" stroke-width="4"/><circle cx="3638.5" cy="696.8" r="4.1" fill="#fff" stroke="#7fc98b" stroke-width="4"/><circle cx="3666.0" cy="696.3" r="4.1" fill="#fff" stroke="#7fc98b" stroke-width="4"/><circle cx="3693.4" cy="695.3" r="4.1" fill="#fff" stroke="#7fc98b" stroke-width="4"/><circle cx="3720.8" cy="697.3" r="4.1" fill="#fff" stroke="#7fc98b" stroke-width="4"/><circle cx="3748.3" cy="698.3" r="4.1" fill="#fff" stroke="#7fc98b" stroke-width="4"/><circle cx="3775.7" cy="696.3" r="4.1" fill="#fff" stroke="#7fc98b" stroke-width="4"/><circle cx="3803.1" cy="695.8" r="4.1" fill="#fff" stroke="#7fc98b" stroke-width="4"/><circle cx="3830.6" cy="697.3" r="4.1" fill="#fff" stroke="#7fc98b" stroke-width="4"/><circle cx="3858.0" cy="698.3" r="4.1" fill="#fff" stroke="#7fc98b" stroke-width="4"/><circle cx="3885.4" cy="698.8" r="4.1" fill="#fff" stroke="#7fc98b" stroke-width="4"/><circle cx="3912.9" cy="698.3" r="4.1" fill="#fff" stroke="#7fc98b" stroke-width="4"/><circle cx="3940.3" cy="698.3" r="4.1" fill="#fff" stroke="#7fc98b" stroke-width="4"/><circle cx="3967.7" cy="697.8" r="4.1" fill="#fff" stroke="#7fc98b" stroke-width="4"/><circle cx="3995.2" cy="697.8" r="4.1" fill="#fff" stroke="#7fc98b" stroke-width="4"/><circle cx="4022.6" cy="696.8" r="4.1" fill="#fff" stroke="#7fc98b" stroke-width="4"/><circle cx="4050.0" cy="696.8" r="4.1" fill="#fff" stroke="#7fc98b" stroke-width="4"/><circle cx="4077.5" cy="695.3" r="4.1" fill="#fff" stroke="#7fc98b" stroke-width="4"/><circle cx="4104.9" cy="756.2" r="4.1" fill="#fff" stroke="#7fc98b" stroke-width="4"/><circle cx="4132.3" cy="695.3" r="4.1" fill="#fff" stroke="#7fc98b" stroke-width="4"/><circle cx="4159.8" cy="696.8" r="4.1" fill="#fff" stroke="#7fc98b" stroke-width="4"/><circle cx="4187.2" cy="697.3" r="4.1" fill="#fff" stroke="#7fc98b" stroke-width="4"/><circle cx="4214.6" cy="697.3" r="4.1" fill="#fff" stroke="#7fc98b" stroke-width="4"/><circle cx="4242.1" cy="697.3" r="4.1" fill="#fff" stroke="#7fc98b" stroke-width="4"/><circle cx="4269.5" cy="697.3" r="4.1" fill="#fff" stroke="#7fc98b" stroke-width="4"/><circle cx="4296.9" cy="697.8" r="4.1" fill="#fff" stroke="#7fc98b" stroke-width="4"/><circle cx="4324.4" cy="726.5" r="4.1" fill="#fff" stroke="#7fc98b" stroke-width="4"/><circle cx="4351.8" cy="699.7" r="4.1" fill="#fff" stroke="#7fc98b" stroke-width="4"/></svg>
<div class="t" style="left:2582.9px;top:600.0px;font-size:21px;font-weight:400;color:#6e7079;letter-spacing:0.85px;">input (Mbps)</div>
<div class="t" style="left:565.4px;width:2000px;text-align:right;top:659.4px;font-size:21px;font-weight:400;color:#6e7079;letter-spacing:0.75px;">1,500</div>
<div class="t" style="left:565.4px;width:2000px;text-align:right;top:745.3px;font-size:21px;font-weight:400;color:#6e7079;letter-spacing:0.75px;">1,200</div>
<div class="t" style="left:565.4px;width:2000px;text-align:right;top:831.2px;font-size:21px;font-weight:400;color:#6e7079;letter-spacing:0.75px;">900</div>
<div class="t" style="left:565.4px;width:2000px;text-align:right;top:917.1px;font-size:21px;font-weight:400;color:#6e7079;letter-spacing:0.75px;">600</div>
<div class="t" style="left:565.4px;width:2000px;text-align:right;top:1002.9px;font-size:21px;font-weight:400;color:#6e7079;letter-spacing:0.75px;">300</div>
<div class="t" style="left:565.4px;width:2000px;text-align:right;top:1088.8px;font-size:21px;font-weight:400;color:#6e7079;letter-spacing:0.75px;">0</div>
<div class="t" style="left:1596.1px;width:2000px;text-align:center;top:1123.4px;font-size:21px;font-weight:400;color:#6e7079;letter-spacing:0.5px;">1.00242</div>
<div class="t" style="left:1705.8px;width:2000px;text-align:center;top:1123.4px;font-size:21px;font-weight:400;color:#6e7079;letter-spacing:0.5px;">5.01421</div>
<div class="t" style="left:1815.6px;width:2000px;text-align:center;top:1123.4px;font-size:21px;font-weight:400;color:#6e7079;letter-spacing:0.5px;">9.02556</div>
<div class="t" style="left:1925.3px;width:2000px;text-align:center;top:1123.4px;font-size:21px;font-weight:400;color:#6e7079;letter-spacing:0.5px;">13.037</div>
<div class="t" style="left:2035.0px;width:2000px;text-align:center;top:1123.4px;font-size:21px;font-weight:400;color:#6e7079;letter-spacing:0.5px;">17.0484</div>
<div class="t" style="left:2144.8px;width:2000px;text-align:center;top:1123.4px;font-size:21px;font-weight:400;color:#6e7079;letter-spacing:0.5px;">21.0602</div>
<div class="t" style="left:2254.5px;width:2000px;text-align:center;top:1123.4px;font-size:21px;font-weight:400;color:#6e7079;letter-spacing:0.5px;">25.0718</div>
<div class="t" style="left:2364.2px;width:2000px;text-align:center;top:1123.4px;font-size:21px;font-weight:400;color:#6e7079;letter-spacing:0.5px;">29.0834</div>
<div class="t" style="left:2473.9px;width:2000px;text-align:center;top:1123.4px;font-size:21px;font-weight:400;color:#6e7079;letter-spacing:0.5px;">33.0951</div>
<div class="t" style="left:2583.7px;width:2000px;text-align:center;top:1123.4px;font-size:21px;font-weight:400;color:#6e7079;letter-spacing:0.5px;">37.1069</div>
<div class="t" style="left:2693.4px;width:2000px;text-align:center;top:1123.4px;font-size:21px;font-weight:400;color:#6e7079;letter-spacing:0.5px;">41.1187</div>
<div class="t" style="left:2803.1px;width:2000px;text-align:center;top:1123.4px;font-size:21px;font-weight:400;color:#6e7079;letter-spacing:0.5px;">45.1304</div>
<div class="t" style="left:2912.9px;width:2000px;text-align:center;top:1123.4px;font-size:21px;font-weight:400;color:#6e7079;letter-spacing:0.5px;">49.1425</div>
<div class="t" style="left:3022.6px;width:2000px;text-align:center;top:1123.4px;font-size:21px;font-weight:400;color:#6e7079;letter-spacing:0.5px;">53.1543</div>
<div class="t" style="left:3132.3px;width:2000px;text-align:center;top:1123.4px;font-size:21px;font-weight:400;color:#6e7079;letter-spacing:0.5px;">57.1661</div>
<div class="t" style="left:3242.1px;width:2000px;text-align:center;top:1123.4px;font-size:21px;font-weight:400;color:#6e7079;letter-spacing:0.5px;">61.1779</div>
<div class="t" style="left:3351.8px;width:2000px;text-align:center;top:1123.4px;font-size:21px;font-weight:400;color:#6e7079;letter-spacing:0.5px;">65.1892</div>
<div class="t" style="left:2473.9px;width:2000px;text-align:center;top:1148.9px;font-size:21px;font-weight:400;color:#6e7079;letter-spacing:0.8px;">time (seconds)</div>
<div class="a" style="left:121.0px;top:1220.6px;width:4427.0px;height:1395.8px;background:#fff;border-radius:12px 12px 12px 0;"></div>
<div class="t" style="left:154.5px;top:1243.7px;font-size:25.2px;font-weight:400;color:#232937;letter-spacing:0.8064px;-webkit-text-stroke:0.81px #232937;">Tables</div>
<div class="a" style="left:4365.6px;top:1230.0px;width:149.0px;height:52.4px;background:#f5f7fe;border-radius:11px;"></div>
<svg class="a" style="left:4357.5px;top:1216.3px" width="80" height="80" viewBox="-40 -40 80 80" fill="none" stroke="#6f80e6" stroke-width="1.578" stroke-linecap="round" stroke-linejoin="round"><g transform="scale(1.6474) translate(-12 -12)"><path d="M12 2.300v11.900"/><path d="M8.400 10.600l3.600 3.600 3.600-3.600"/><path d="M7.600 7H7.300C4.200 7 2.500 8.700 2.500 11.800v1.300"/><path d="M2.500 16.600v.1c0 3.100 1.700 4.800 4.800 4.800h9.400c3.100 0 4.800-1.700 4.800-4.800v-4.900c0-2.700-1.300-4.300-3.600-4.700"/></g></svg>
<div class="t" style="left:4430.9px;top:1245.7px;font-size:22.96px;font-weight:400;color:#6f80e6;letter-spacing:0.73472px;-webkit-text-stroke:0.73px #6f80e6;">Export</div>
<div class="a" style="left:121.0px;top:1292.0px;width:4427.0px;height:2.0px;background:#dee2ea;"></div>
<div class="a" style="left:121.0px;top:1294.0px;width:4427.0px;height:70.5px;background:#f5f7fc;"></div>
<div class="a" style="left:121.0px;top:1364.3px;width:4427.0px;height:2.0px;background:#dee2ea;"></div>
<div class="t" style="left:154.5px;top:1317.9px;font-size:22.96px;font-weight:400;color:#232937;letter-spacing:0.73472px;-webkit-text-stroke:0.73px #232937;">Tool &amp; Type</div>
<div class="t" style="left:395.0px;top:1317.9px;font-size:22.96px;font-weight:400;color:#232937;letter-spacing:0.73472px;-webkit-text-stroke:0.73px #232937;">Name</div>
<div class="t" style="left:956.4px;top:1317.9px;font-size:22.96px;font-weight:400;color:#232937;letter-spacing:0.73472px;-webkit-text-stroke:0.73px #232937;">Keys</div>
<div class="t" style="left:1190.0px;top:1317.9px;font-size:22.96px;font-weight:400;color:#232937;letter-spacing:0.73472px;-webkit-text-stroke:0.73px #232937;">Comments</div>
<div class="t" style="left:3562.5px;top:1317.9px;font-size:22.96px;font-weight:400;color:#232937;letter-spacing:0.73472px;-webkit-text-stroke:0.73px #232937;">Value</div>
<div class="a" style="left:121.0px;top:1366.3px;width:7.5px;height:1250.1px;background:#eceffc;"></div>
<div class="a" style="left:128.5px;top:1436.8px;width:4419.5px;height:2.0px;background:#dee2ea;"></div>
<div class="t" style="left:154.5px;top:1389.4px;font-size:21.14px;font-weight:400;color:#232937;letter-spacing:0.6764800000000001px;-webkit-text-stroke:0.68px #232937;">/loadavg</div>
<div class="t" style="left:261.1px;top:1390.4px;font-size:21px;font-weight:400;color:#232937;letter-spacing:0.82px;">load-average</div>
<div class="t" style="left:395.0px;top:1390.4px;font-size:21px;font-weight:400;color:#232937;letter-spacing:0.6px;">Load average</div>
<div class="t" style="left:3563.1px;top:1389.4px;font-size:21.14px;font-weight:400;color:#232937;letter-spacing:0.6764800000000001px;-webkit-text-stroke:0.68px #232937;">single</div>
<div class="t" style="left:3646.5px;top:1390.4px;font-size:21px;font-weight:400;color:#232937;letter-spacing:0.72px;">4.49</div>
<div class="a" style="left:128.5px;top:1510.4px;width:4419.5px;height:2.0px;background:#dee2ea;"></div>
<div class="t" style="left:154.5px;top:1463.1px;font-size:21.14px;font-weight:400;color:#232937;letter-spacing:0.6764800000000001px;-webkit-text-stroke:0.68px #232937;">statistics</div>
<div class="t" style="left:267.0px;top:1464.1px;font-size:21px;font-weight:400;color:#232937;letter-spacing:0.82px;">throughput</div>
<div class="t" style="left:395.0px;top:1464.1px;font-size:21px;font-weight:400;color:#232937;letter-spacing:0.6px;">output</div>
<div class="t" style="left:3563.1px;top:1463.1px;font-size:21.14px;font-weight:400;color:#232937;letter-spacing:0.6764800000000001px;-webkit-text-stroke:0.68px #232937;">max</div>
<div class="t" style="left:3629.0px;top:1464.1px;font-size:21px;font-weight:400;color:#232937;letter-spacing:0.72px;">9200.06 Mbps</div>
<div class="a" style="left:128.5px;top:1584.1px;width:4419.5px;height:2.0px;background:#dee2ea;"></div>
<div class="t" style="left:154.5px;top:1536.7px;font-size:21.14px;font-weight:400;color:#232937;letter-spacing:0.6764800000000001px;-webkit-text-stroke:0.68px #232937;">statistics</div>
<div class="t" style="left:267.0px;top:1537.7px;font-size:21px;font-weight:400;color:#232937;letter-spacing:0.82px;">throughput</div>
<div class="t" style="left:395.0px;top:1537.7px;font-size:21px;font-weight:400;color:#232937;letter-spacing:0.6px;">output</div>
<div class="t" style="left:3563.1px;top:1536.7px;font-size:21.14px;font-weight:400;color:#232937;letter-spacing:0.6764800000000001px;-webkit-text-stroke:0.68px #232937;">mean</div>
<div class="t" style="left:3642.2px;top:1537.7px;font-size:21px;font-weight:400;color:#232937;letter-spacing:0.72px;">3408.61 Mbps</div>
<div class="a" style="left:128.5px;top:1657.7px;width:4419.5px;height:2.0px;background:#dee2ea;"></div>
<div class="t" style="left:154.5px;top:1610.4px;font-size:21.14px;font-weight:400;color:#232937;letter-spacing:0.6764800000000001px;-webkit-text-stroke:0.68px #232937;">statistics</div>
<div class="t" style="left:267.0px;top:1611.4px;font-size:21px;font-weight:400;color:#232937;letter-spacing:0.82px;">throughput</div>
<div class="t" style="left:395.0px;top:1611.4px;font-size:21px;font-weight:400;color:#232937;letter-spacing:0.6px;">output</div>
<div class="t" style="left:3563.1px;top:1610.4px;font-size:21.14px;font-weight:400;color:#232937;letter-spacing:0.6764800000000001px;-webkit-text-stroke:0.68px #232937;">median</div>
<div class="t" style="left:3660.2px;top:1611.4px;font-size:21px;font-weight:400;color:#232937;letter-spacing:0.72px;">4444 Mbps</div>
<div class="a" style="left:128.5px;top:1731.4px;width:4419.5px;height:2.0px;background:#dee2ea;"></div>
<div class="t" style="left:154.5px;top:1684.0px;font-size:21.14px;font-weight:400;color:#232937;letter-spacing:0.6764800000000001px;-webkit-text-stroke:0.68px #232937;">statistics</div>
<div class="t" style="left:267.0px;top:1685.1px;font-size:21px;font-weight:400;color:#232937;letter-spacing:0.82px;">throughput</div>
<div class="t" style="left:395.0px;top:1685.1px;font-size:21px;font-weight:400;color:#232937;letter-spacing:0.6px;">output</div>
<div class="t" style="left:3563.1px;top:1684.0px;font-size:21.14px;font-weight:400;color:#232937;letter-spacing:0.6764800000000001px;-webkit-text-stroke:0.68px #232937;">min</div>
<div class="t" style="left:3623.7px;top:1685.1px;font-size:21px;font-weight:400;color:#232937;letter-spacing:0.72px;">4344.86 Mbps</div>
<div class="a" style="left:128.5px;top:1805.1px;width:4419.5px;height:2.0px;background:#dee2ea;"></div>
<div class="t" style="left:154.5px;top:1757.7px;font-size:21.14px;font-weight:400;color:#232937;letter-spacing:0.6764800000000001px;-webkit-text-stroke:0.68px #232937;">statistics</div>
<div class="t" style="left:267.0px;top:1758.7px;font-size:21px;font-weight:400;color:#232937;letter-spacing:0.82px;">throughput</div>
<div class="t" style="left:395.0px;top:1758.7px;font-size:21px;font-weight:400;color:#232937;letter-spacing:0.6px;">input</div>
<div class="t" style="left:3563.1px;top:1757.7px;font-size:21.14px;font-weight:400;color:#232937;letter-spacing:0.6764800000000001px;-webkit-text-stroke:0.68px #232937;">max</div>
<div class="t" style="left:3629.0px;top:1758.7px;font-size:21px;font-weight:400;color:#232937;letter-spacing:0.72px;">2345.66 Mbps</div>
<div class="a" style="left:128.5px;top:1878.7px;width:4419.5px;height:2.0px;background:#dee2ea;"></div>
<div class="t" style="left:154.5px;top:1831.4px;font-size:21.14px;font-weight:400;color:#232937;letter-spacing:0.6764800000000001px;-webkit-text-stroke:0.68px #232937;">statistics</div>
<div class="t" style="left:267.0px;top:1832.4px;font-size:21px;font-weight:400;color:#232937;letter-spacing:0.82px;">throughput</div>
<div class="t" style="left:395.0px;top:1832.4px;font-size:21px;font-weight:400;color:#232937;letter-spacing:0.6px;">input</div>
<div class="t" style="left:3563.1px;top:1831.4px;font-size:21.14px;font-weight:400;color:#232937;letter-spacing:0.6764800000000001px;-webkit-text-stroke:0.68px #232937;">mean</div>
<div class="t" style="left:3642.2px;top:1832.4px;font-size:21px;font-weight:400;color:#232937;letter-spacing:0.72px;">1442.91 Mbps</div>
<div class="a" style="left:128.5px;top:1952.4px;width:4419.5px;height:2.0px;background:#dee2ea;"></div>
<div class="t" style="left:154.5px;top:1905.0px;font-size:21.14px;font-weight:400;color:#232937;letter-spacing:0.6764800000000001px;-webkit-text-stroke:0.68px #232937;">statistics</div>
<div class="t" style="left:267.0px;top:1906.0px;font-size:21px;font-weight:400;color:#232937;letter-spacing:0.82px;">throughput</div>
<div class="t" style="left:395.0px;top:1906.0px;font-size:21px;font-weight:400;color:#232937;letter-spacing:0.6px;">input</div>
<div class="t" style="left:3563.1px;top:1905.0px;font-size:21.14px;font-weight:400;color:#232937;letter-spacing:0.6764800000000001px;-webkit-text-stroke:0.68px #232937;">median</div>
<div class="t" style="left:3660.2px;top:1906.0px;font-size:21px;font-weight:400;color:#232937;letter-spacing:0.72px;">1403.15 Mbps</div>
<div class="a" style="left:128.5px;top:2026.0px;width:4419.5px;height:2.0px;background:#dee2ea;"></div>
<div class="t" style="left:154.5px;top:1978.7px;font-size:21.14px;font-weight:400;color:#232937;letter-spacing:0.6764800000000001px;-webkit-text-stroke:0.68px #232937;">statistics</div>
<div class="t" style="left:267.0px;top:1979.7px;font-size:21px;font-weight:400;color:#232937;letter-spacing:0.82px;">throughput</div>
<div class="t" style="left:395.0px;top:1979.7px;font-size:21px;font-weight:400;color:#232937;letter-spacing:0.6px;">input</div>
<div class="t" style="left:3563.1px;top:1978.7px;font-size:21.14px;font-weight:400;color:#232937;letter-spacing:0.6764800000000001px;-webkit-text-stroke:0.68px #232937;">min</div>
<div class="t" style="left:3623.7px;top:1979.7px;font-size:21px;font-weight:400;color:#232937;letter-spacing:0.72px;">1303.81 Mbps</div>
<div class="a" style="left:128.5px;top:2099.7px;width:4419.5px;height:2.0px;background:#dee2ea;"></div>
<div class="t" style="left:154.5px;top:2052.3px;font-size:21.14px;font-weight:400;color:#232937;letter-spacing:0.6764800000000001px;-webkit-text-stroke:0.68px #232937;">wrk</div>
<div class="t" style="left:212.0px;top:2053.4px;font-size:21px;font-weight:400;color:#232937;letter-spacing:0.82px;">throughput</div>
<div class="t" style="left:1189.1px;top:2053.4px;font-size:21px;font-weight:400;color:#232937;letter-spacing:0.93px;">command=wrk --connections 2048 --threads 3 --duration</div>
<div class="t" style="left:3563.1px;top:2052.3px;font-size:21.14px;font-weight:400;color:#232937;letter-spacing:0.6764800000000001px;-webkit-text-stroke:0.68px #232937;">mean</div>
<div class="t" style="left:3642.2px;top:2053.4px;font-size:21px;font-weight:400;color:#232937;letter-spacing:0.72px;">1269.78 Mbps</div>
<div class="a" style="left:128.5px;top:2173.4px;width:4419.5px;height:2.0px;background:#dee2ea;"></div>
<div class="t" style="left:154.5px;top:2126.0px;font-size:21.14px;font-weight:400;color:#232937;letter-spacing:0.6764800000000001px;-webkit-text-stroke:0.68px #232937;">wrk</div>
<div class="t" style="left:212.0px;top:2127.0px;font-size:21px;font-weight:400;color:#232937;letter-spacing:0.82px;">rps</div>
<div class="t" style="left:1189.1px;top:2127.0px;font-size:21px;font-weight:400;color:#232937;letter-spacing:0.93px;">command=wrk --connections 2048 --threads 3 --duration</div>
<div class="t" style="left:3563.1px;top:2126.0px;font-size:21.14px;font-weight:400;color:#232937;letter-spacing:0.6764800000000001px;-webkit-text-stroke:0.68px #232937;">mean</div>
<div class="t" style="left:3642.2px;top:2127.0px;font-size:21px;font-weight:400;color:#232937;letter-spacing:0.72px;">135194 rps</div>
<div class="a" style="left:128.5px;top:2247.0px;width:4419.5px;height:2.0px;background:#dee2ea;"></div>
<div class="t" style="left:154.5px;top:2199.7px;font-size:21.14px;font-weight:400;color:#232937;letter-spacing:0.6764800000000001px;-webkit-text-stroke:0.68px #232937;">wrk</div>
<div class="t" style="left:212.0px;top:2200.7px;font-size:21px;font-weight:400;color:#232937;letter-spacing:0.82px;">latency</div>
<div class="t" style="left:395.0px;top:2200.7px;font-size:21px;font-weight:400;color:#232937;letter-spacing:0.6px;">per-thread</div>
<div class="t" style="left:1189.1px;top:2200.7px;font-size:21px;font-weight:400;color:#232937;letter-spacing:0.93px;">command=wrk --connections 2048 --threads 3 --duration</div>
<div class="t" style="left:3563.1px;top:2199.7px;font-size:21.14px;font-weight:400;color:#232937;letter-spacing:0.6764800000000001px;-webkit-text-stroke:0.68px #232937;">max</div>
<div class="t" style="left:3629.0px;top:2200.7px;font-size:21px;font-weight:400;color:#232937;letter-spacing:0.72px;">47290 µseconds</div>
<div class="a" style="left:128.5px;top:2320.7px;width:4419.5px;height:2.0px;background:#dee2ea;"></div>
<div class="t" style="left:154.5px;top:2273.3px;font-size:21.14px;font-weight:400;color:#232937;letter-spacing:0.6764800000000001px;-webkit-text-stroke:0.68px #232937;">wrk</div>
<div class="t" style="left:212.0px;top:2274.3px;font-size:21px;font-weight:400;color:#232937;letter-spacing:0.82px;">latency</div>
<div class="t" style="left:395.0px;top:2274.3px;font-size:21px;font-weight:400;color:#232937;letter-spacing:0.6px;">per-thread</div>
<div class="t" style="left:1189.1px;top:2274.3px;font-size:21px;font-weight:400;color:#232937;letter-spacing:0.93px;">command=wrk --connections 2048 --threads 3 --duration</div>
<div class="t" style="left:3563.1px;top:2273.3px;font-size:21.14px;font-weight:400;color:#232937;letter-spacing:0.6764800000000001px;-webkit-text-stroke:0.68px #232937;">mean</div>
<div class="t" style="left:3642.2px;top:2274.3px;font-size:21px;font-weight:400;color:#232937;letter-spacing:0.72px;">15110 µseconds</div>
<div class="a" style="left:128.5px;top:2394.3px;width:4419.5px;height:2.0px;background:#dee2ea;"></div>
<div class="t" style="left:154.5px;top:2347.0px;font-size:21.14px;font-weight:400;color:#232937;letter-spacing:0.6764800000000001px;-webkit-text-stroke:0.68px #232937;">wrk</div>
<div class="t" style="left:212.0px;top:2348.0px;font-size:21px;font-weight:400;color:#232937;letter-spacing:0.82px;">latency</div>
<div class="t" style="left:395.0px;top:2348.0px;font-size:21px;font-weight:400;color:#232937;letter-spacing:0.6px;">per-thread</div>
<div class="t" style="left:1189.1px;top:2348.0px;font-size:21px;font-weight:400;color:#232937;letter-spacing:0.93px;">command=wrk --connections 2048 --threads 3 --duration</div>
<div class="t" style="left:3563.1px;top:2347.0px;font-size:21.14px;font-weight:400;color:#232937;letter-spacing:0.6764800000000001px;-webkit-text-stroke:0.68px #232937;">stdev</div>
<div class="t" style="left:3642.7px;top:2348.0px;font-size:21px;font-weight:400;color:#232937;letter-spacing:0.72px;">5480 µseconds</div>
<div class="a" style="left:128.5px;top:2468.0px;width:4419.5px;height:2.0px;background:#dee2ea;"></div>
<div class="t" style="left:154.5px;top:2420.6px;font-size:21.14px;font-weight:400;color:#232937;letter-spacing:0.6764800000000001px;-webkit-text-stroke:0.68px #232937;">wrk</div>
<div class="t" style="left:212.0px;top:2421.7px;font-size:21px;font-weight:400;color:#232937;letter-spacing:0.82px;">rps</div>
<div class="t" style="left:395.0px;top:2421.7px;font-size:21px;font-weight:400;color:#232937;letter-spacing:0.6px;">per-thread</div>
<div class="t" style="left:1189.1px;top:2421.7px;font-size:21px;font-weight:400;color:#232937;letter-spacing:0.93px;">command=wrk --connections 2048 --threads 3 --duration</div>
<div class="t" style="left:3563.1px;top:2420.6px;font-size:21.14px;font-weight:400;color:#232937;letter-spacing:0.6764800000000001px;-webkit-text-stroke:0.68px #232937;">max</div>
<div class="t" style="left:3629.0px;top:2421.7px;font-size:21px;font-weight:400;color:#232937;letter-spacing:0.72px;">46700 rps</div>
<div class="a" style="left:128.5px;top:2541.7px;width:4419.5px;height:2.0px;background:#dee2ea;"></div>
<div class="t" style="left:154.5px;top:2494.3px;font-size:21.14px;font-weight:400;color:#232937;letter-spacing:0.6764800000000001px;-webkit-text-stroke:0.68px #232937;">wrk</div>
<div class="t" style="left:212.0px;top:2495.3px;font-size:21px;font-weight:400;color:#232937;letter-spacing:0.82px;">rps</div>
<div class="t" style="left:395.0px;top:2495.3px;font-size:21px;font-weight:400;color:#232937;letter-spacing:0.6px;">per-thread</div>
<div class="t" style="left:1189.1px;top:2495.3px;font-size:21px;font-weight:400;color:#232937;letter-spacing:0.93px;">command=wrk --connections 2048 --threads 3 --duration</div>
<div class="t" style="left:3563.1px;top:2494.3px;font-size:21.14px;font-weight:400;color:#232937;letter-spacing:0.6764800000000001px;-webkit-text-stroke:0.68px #232937;">mean</div>
<div class="t" style="left:3642.2px;top:2495.3px;font-size:21px;font-weight:400;color:#232937;letter-spacing:0.72px;">45330 rps</div>
<div class="t" style="left:154.5px;top:2568.0px;font-size:21.14px;font-weight:400;color:#232937;letter-spacing:0.6764800000000001px;-webkit-text-stroke:0.68px #232937;">wrk</div>
<div class="t" style="left:212.0px;top:2569.0px;font-size:21px;font-weight:400;color:#232937;letter-spacing:0.82px;">rps</div>
<div class="t" style="left:395.0px;top:2569.0px;font-size:21px;font-weight:400;color:#232937;letter-spacing:0.6px;">per-thread</div>
<div class="t" style="left:1189.1px;top:2569.0px;font-size:21px;font-weight:400;color:#232937;letter-spacing:0.93px;">command=wrk --connections 2048 --threads 3 --duration</div>
<div class="t" style="left:3563.1px;top:2568.0px;font-size:21.14px;font-weight:400;color:#232937;letter-spacing:0.6764800000000001px;-webkit-text-stroke:0.68px #232937;">stdev</div>
<div class="t" style="left:3642.7px;top:2569.0px;font-size:21px;font-weight:400;color:#232937;letter-spacing:0.72px;">504.76 rps</div>
<svg class="a" style="left:0;top:0" width="4564" height="2748" viewBox="0 0 4564 2748" fill="none" stroke="#d9492c" stroke-width="5.2" stroke-linecap="round" stroke-linejoin="round"><path d="M1880.7 1337.6L1348.8 1165.8"/><path d="M1407.9 1137.9L1348.8 1165.8L1379.2 1223.6"/><path d="M2715.5 1339L3394.4 1172.8"/><path d="M3337 1140L3394.4 1172.8L3358.8 1228"/><path d="M4008 1312.4L3729.5 1392.3"/><path d="M3762.7 1335.7L3729.5 1392.3L3788.2 1424"/></svg>
<svg class="a" style="left:1980px;top:345px" width="690" height="130" viewBox="1980 345 690 130"><path fill="#000" d="M2001.5 353.5H2647A13 13 0 0 1 2660 366.500V400.500A13 13 0 0 1 2647 413.500H2620.500A12 12 0 0 0 2608.500 425.500V455.500A13 13 0 0 1 2595.500 468.500H2053.500A13 13 0 0 1 2040.500 455.500V425.500A12 12 0 0 0 2028.500 413.500H2001.500A13 13 0 0 1 1988.500 400.500V366.500A13 13 0 0 1 2001.500 353.500Z"/></svg>
<div class="t" style="left:1324.6px;width:2000px;text-align:center;top:361.1px;font-size:46px;font-weight:700;color:#fff;letter-spacing:0.7px;-webkit-text-stroke:0.7px #fff;">Measurement sequences are</div>
<div class="t" style="left:1324.0px;width:2000px;text-align:center;top:417.0px;font-size:46px;font-weight:700;color:#fff;-webkit-text-stroke:0.7px #fff;">displayed only on charts</div>
<div class="a" style="left:1884.3px;top:1309.3px;width:827.2px;height:59.2px;background:#000;border-radius:13px;"></div>
<div class="t" style="left:1298.0px;width:2000px;text-align:center;top:1315.5px;font-size:46px;font-weight:700;color:#fff;letter-spacing:0.1px;-webkit-text-stroke:0.7px #fff;">Charts according to views from logs</div>
<div class="a" style="left:3707.9px;top:1185.0px;width:605.4px;height:115.8px;background:#000;border-radius:13px;"></div>
<div class="t" style="left:3010.3px;width:2000px;text-align:center;top:1192.6px;font-size:46px;font-weight:700;color:#fff;letter-spacing:0.3px;-webkit-text-stroke:0.7px #fff;">Single measurements are</div>
<div class="t" style="left:3010.1px;width:2000px;text-align:center;top:1248.1px;font-size:46px;font-weight:700;color:#fff;-webkit-text-stroke:0.7px #fff;">displayed only in the table</div>
</body></html>
